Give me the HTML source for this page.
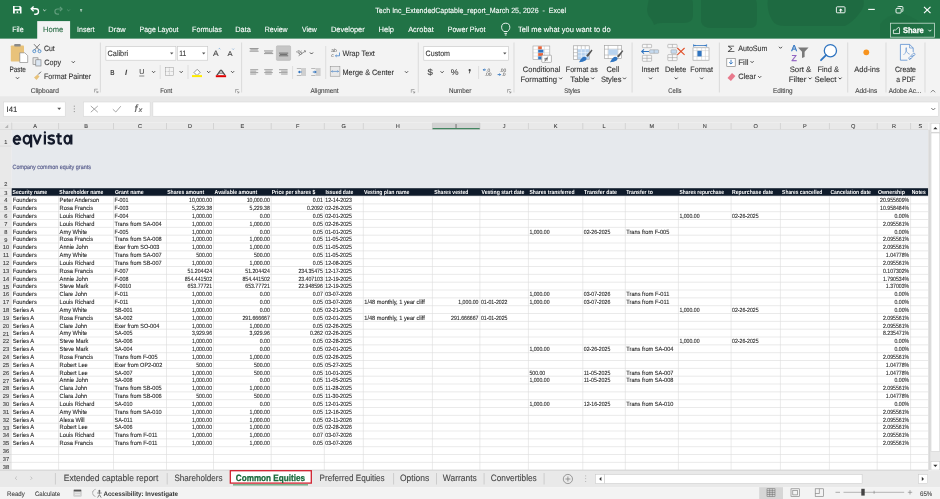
<!DOCTYPE html>
<html><head><meta charset="utf-8"><title>Excel - Common Equities</title>
<style>
html,body{margin:0;padding:0;width:940px;height:499px;overflow:hidden;background:#fff;}
svg{position:absolute;left:0;top:0;display:block;will-change:transform;}
text{font-family:"Liberation Sans",sans-serif;white-space:pre;text-rendering:geometricPrecision;}
</style></head><body>
<svg width="940" height="499" viewBox="0 0 940 499">
<rect x="0.00" y="0.00" width="940.00" height="38.80" fill="#217346" />
<g fill="#1e6940" opacity="0.8"><path d="M649 -2 h40 q4 0 4 6 v12 q0 7 -9 7 h-22 q-5 0 -8 2 q-1 -3 -3 -6 q-4 -4 -4 -10 z"/><path d="M701 -2 h52 q4 0 4 8 v14 q0 8 -6 8 h-40 q-8 0 -10 -6 z"/><path d="M768 -2 h95 q3 8 -4 16 q-6 8 -14 12 h-60 q-10 0 -13 -6 q-6 -10 -4 -22 z"/><path d="M880 24 q10 -12 24 -10 q14 4 20 14 v10 h-44 z" opacity="0.5"/></g>
<rect x="37.20" y="21.10" width="32.90" height="18.50" fill="#F3F3F3" />
<path d="M13 5.9 h7.2 l1.3 1.3 v6.4 h-8.5 z" fill="#fff"/><rect x="14.6" y="6.6" width="4.8" height="2.4" fill="#217346"/><rect x="14.8" y="10.6" width="5.2" height="3" fill="#217346"/><rect x="16.6" y="11.4" width="1.6" height="1.6" fill="#fff"/>
<g fill="none" stroke="#fff" stroke-width="1.4"><path d="M31.2 8.8 h4.6 a2.7 2.7 0 0 1 0 5.4 h-1.6"/><path d="M33.6 6.4 l-2.4 2.4 l2.4 2.4"/></g>
<path d="M43.2 9.6 l1.3 1.3 l1.3 -1.3" fill="none" stroke="#fff" stroke-width="0.8"/>
<g fill="none" stroke="#5f9c7b" stroke-width="1.2"><path d="M62 9 h-4.5 a2.6 2.6 0 0 0 0 5.2 h1.5"/><path d="M59.9 6.8 l2.2 2.2 l-2.2 2.2"/></g>
<path d="M67.2 9.6 l1.3 1.3 l1.3 -1.3" fill="none" stroke="#5f9c7b" stroke-width="0.8"/>
<g fill="#fff"><rect x="80" y="9.2" width="2.2" height="0.6"/><path d="M80 10.6 h2.2 l-1.1 1.1 z"/></g>
<text x="375.30" y="13.40" font-size="7.60" font-weight="normal" fill="#ffffff" stroke="#ffffff" stroke-width="0.1" textLength="190.70" lengthAdjust="spacingAndGlyphs" >Tech Inc_ExtendedCaptable_report_March 25, 2026  -  Excel</text>
<rect x="836.4" y="6.8" width="8.6" height="6" rx="0.8" fill="none" stroke="#fff" stroke-width="0.9"/><path d="M838.6 10.4 l2.1 -2 l2.1 2 z M840.2 10.2 h1 v2.2 h-1 z" fill="#fff"/>
<line x1="868.20" y1="9.40" x2="874.80" y2="9.40" stroke="#fff" stroke-width="1.1" />
<g fill="none" stroke="#fff" stroke-width="0.9"><rect x="896" y="8.4" width="5.2" height="4.6" rx="1"/><path d="M897.6 7.1 q0 -0.6 0.8 -0.6 h3.6 q0.9 0 0.9 0.9 v3.4 q0 0.8 -0.6 0.8"/></g>
<g stroke="#fff" stroke-width="1.15"><line x1="924" y1="6.8" x2="930.5" y2="13.2"/><line x1="930.5" y1="6.8" x2="924" y2="13.2"/></g>
<rect x="890.6" y="23.2" width="43.8" height="14" fill="none" stroke="#c5dccf" stroke-width="0.8"/>
<path d="M893.4 33.6 v-3.6 h2.2 l2.6 -2.4 q1.2 -0.6 1.3 0.6 v5.4 z" fill="none" stroke="#fff" stroke-width="0.8"/>
<text x="902.90" y="33.20" font-size="8.20" font-weight="bold" fill="#ffffff" stroke="#ffffff" stroke-width="0.25" textLength="20.90" lengthAdjust="spacingAndGlyphs" >Share</text>
<path d="M928.4 29.8 l1.5 1.5 l1.5 -1.5" fill="none" stroke="#fff" stroke-width="0.9"/>
<text x="12.20" y="32.20" font-size="7.70" font-weight="normal" fill="#ffffff" stroke="#ffffff" stroke-width="0.1" textLength="11.40" lengthAdjust="spacingAndGlyphs" >File</text>
<text x="43.10" y="32.20" font-size="7.70" font-weight="normal" fill="#2b6e47" stroke="#2b6e47" stroke-width="0.1" textLength="20.20" lengthAdjust="spacingAndGlyphs" >Home</text>
<text x="77.10" y="32.20" font-size="7.70" font-weight="normal" fill="#ffffff" stroke="#ffffff" stroke-width="0.1" textLength="17.50" lengthAdjust="spacingAndGlyphs" >Insert</text>
<text x="108.30" y="32.20" font-size="7.70" font-weight="normal" fill="#ffffff" stroke="#ffffff" stroke-width="0.1" textLength="17.38" lengthAdjust="spacingAndGlyphs" >Draw</text>
<text x="139.60" y="32.20" font-size="7.70" font-weight="normal" fill="#ffffff" stroke="#ffffff" stroke-width="0.1" textLength="38.90" lengthAdjust="spacingAndGlyphs" >Page Layout</text>
<text x="192.10" y="32.20" font-size="7.70" font-weight="normal" fill="#ffffff" stroke="#ffffff" stroke-width="0.1" textLength="29.80" lengthAdjust="spacingAndGlyphs" >Formulas</text>
<text x="235.30" y="32.20" font-size="7.70" font-weight="normal" fill="#ffffff" stroke="#ffffff" stroke-width="0.1" textLength="15.59" lengthAdjust="spacingAndGlyphs" >Data</text>
<text x="264.70" y="32.20" font-size="7.70" font-weight="normal" fill="#ffffff" stroke="#ffffff" stroke-width="0.1" textLength="22.98" lengthAdjust="spacingAndGlyphs" >Review</text>
<text x="301.90" y="32.20" font-size="7.70" font-weight="normal" fill="#ffffff" stroke="#ffffff" stroke-width="0.1" textLength="14.88" lengthAdjust="spacingAndGlyphs" >View</text>
<text x="331.00" y="32.20" font-size="7.70" font-weight="normal" fill="#ffffff" stroke="#ffffff" stroke-width="0.1" textLength="33.70" lengthAdjust="spacingAndGlyphs" >Developer</text>
<text x="378.50" y="32.20" font-size="7.70" font-weight="normal" fill="#ffffff" stroke="#ffffff" stroke-width="0.1" textLength="15.50" lengthAdjust="spacingAndGlyphs" >Help</text>
<text x="408.20" y="32.20" font-size="7.70" font-weight="normal" fill="#ffffff" stroke="#ffffff" stroke-width="0.1" textLength="25.50" lengthAdjust="spacingAndGlyphs" >Acrobat</text>
<text x="447.70" y="32.20" font-size="7.70" font-weight="normal" fill="#ffffff" stroke="#ffffff" stroke-width="0.1" textLength="37.80" lengthAdjust="spacingAndGlyphs" >Power Pivot</text>
<text x="518.00" y="32.20" font-size="7.70" font-weight="normal" fill="#ffffff" stroke="#ffffff" stroke-width="0.1" textLength="92.60" lengthAdjust="spacingAndGlyphs" >Tell me what you want to do</text>
<g fill="none" stroke="#fff" stroke-width="0.9"><path d="M503.8 31.5 c-1.5-1.5-2.2-2.6-2.2-4.2 a4.1 4.1 0 0 1 8.2 0 c0 1.6-0.7 2.7-2.2 4.2 z"/><line x1="504.4" y1="33.4" x2="507" y2="33.4"/><line x1="504.8" y1="35" x2="506.6" y2="35"/></g>
<rect x="0.00" y="38.80" width="940.00" height="57.40" fill="#F3F3F3" />
<line x1="100.40" y1="42.50" x2="100.40" y2="92.50" stroke="#d0d0d0" stroke-width="0.7" />
<line x1="241.60" y1="42.50" x2="241.60" y2="92.50" stroke="#d0d0d0" stroke-width="0.7" />
<line x1="418.30" y1="42.50" x2="418.30" y2="92.50" stroke="#d0d0d0" stroke-width="0.7" />
<line x1="514.00" y1="42.50" x2="514.00" y2="92.50" stroke="#d0d0d0" stroke-width="0.7" />
<line x1="632.10" y1="42.50" x2="632.10" y2="92.50" stroke="#d0d0d0" stroke-width="0.7" />
<line x1="719.40" y1="42.50" x2="719.40" y2="92.50" stroke="#d0d0d0" stroke-width="0.7" />
<line x1="847.70" y1="42.50" x2="847.70" y2="92.50" stroke="#d0d0d0" stroke-width="0.7" />
<line x1="886.00" y1="42.50" x2="886.00" y2="92.50" stroke="#d0d0d0" stroke-width="0.7" />
<line x1="925.00" y1="42.50" x2="925.00" y2="92.50" stroke="#d0d0d0" stroke-width="0.7" />
<rect x="10.8" y="45.5" width="13.2" height="16" rx="0.8" fill="#e8c27a"/>
<rect x="14.2" y="44" width="6.5" height="2.6" rx="0.8" fill="#8a8a8a"/>
<path d="M19.8 52.8 h5 l2.9 2.9 v6.8 h-7.9 z" fill="#fff" stroke="#7a7a7a" stroke-width="0.6"/>
<text x="9.40" y="71.80" font-size="7.80" font-weight="normal" fill="#333333" stroke="#333333" stroke-width="0.1" textLength="16.40" lengthAdjust="spacingAndGlyphs" >Paste</text>
<path d="M16 77.3 l1.5 1.5 l1.5 -1.5" fill="none" stroke="#444" stroke-width="1"/>
<g fill="none" stroke-width="0.8"><path d="M34 44.2 l5.5 6" stroke="#555"/><path d="M39.8 44.2 l-5.5 6" stroke="#555"/><circle cx="34.3" cy="51.2" r="1.5" stroke="#3b7fc4"/><circle cx="39.5" cy="51.2" r="1.5" stroke="#3b7fc4"/></g>
<text x="43.90" y="51.00" font-size="7.80" font-weight="normal" fill="#333333" stroke="#333333" stroke-width="0.1" textLength="10.80" lengthAdjust="spacingAndGlyphs" >Cut</text>
<g fill="none" stroke="#777" stroke-width="0.6"><rect x="33" y="57.8" width="5" height="6.5" fill="#e9e9e9"/><rect x="35.8" y="59.8" width="5.2" height="6.2" fill="#dbe6f2"/></g>
<text x="44.20" y="65.10" font-size="7.80" font-weight="normal" fill="#333333" stroke="#333333" stroke-width="0.1" textLength="16.80" lengthAdjust="spacingAndGlyphs" >Copy</text>
<path d="M71.8 61.3 l1.5 1.5 l1.5 -1.5" fill="none" stroke="#444" stroke-width="1"/>
<path d="M34 77.5 l3.5 -3 l2 2 l-3 3.5 z" fill="#e8c27a"/><path d="M38.2 74.5 l2.8 -2.8" stroke="#555" stroke-width="0.9"/>
<text x="44.00" y="79.40" font-size="7.80" font-weight="normal" fill="#333333" stroke="#333333" stroke-width="0.1" textLength="47.20" lengthAdjust="spacingAndGlyphs" >Format Painter</text>
<text x="30.70" y="93.40" font-size="6.90" font-weight="normal" fill="#444444" stroke="#444444" stroke-width="0.1" textLength="28.20" lengthAdjust="spacingAndGlyphs" >Clipboard</text>
<g fill="none" stroke="#777" stroke-width="0.55"><path d="M94.5 92.4 v-3.2 h3.2"/><path d="M95.7 90.4 l2.2 2.2 M97.9 91.0 v1.6 h-1.6"/></g>
<rect x="105.9" y="46.6" width="70" height="13.6" fill="#fff" stroke="#c6c6c6" stroke-width="0.6"/>
<text x="107.60" y="56.30" font-size="7.80" font-weight="normal" fill="#333333" stroke="#333333" stroke-width="0.1" textLength="20.60" lengthAdjust="spacingAndGlyphs" >Calibri</text>
<path d="M170.0 52.6 h3.4 l-1.7 2 z" fill="#555"/>
<rect x="177.5" y="46.6" width="30.2" height="13.6" fill="#fff" stroke="#c6c6c6" stroke-width="0.6"/>
<text x="179.20" y="56.30" font-size="7.80" font-weight="normal" fill="#333333" stroke="#333333" stroke-width="0.1" textLength="7.00" lengthAdjust="spacingAndGlyphs" >11</text>
<path d="M202.0 52.6 h3.4 l-1.7 2 z" fill="#555"/>
<text x="213.00" y="55.50" font-size="7.80" font-weight="normal" fill="#444" stroke="#444" stroke-width="0.1" textLength="5.60" lengthAdjust="spacingAndGlyphs" >A</text>
<path d="M218.5 49.2 l0.9 -0.9 l0.9 0.9" fill="none" stroke="#3b7fc4" stroke-width="0.5"/>
<text x="227.50" y="55.50" font-size="6.80" font-weight="normal" fill="#444" stroke="#444" stroke-width="0.1" textLength="5.10" lengthAdjust="spacingAndGlyphs" >A</text>
<path d="M232.3 48.6 l0.9 0.9 l0.9 -0.9" fill="none" stroke="#3b7fc4" stroke-width="0.5"/>
<text x="110.20" y="75.10" font-size="7.40" font-weight="bold" fill="#444" textLength="4.30" lengthAdjust="spacingAndGlyphs" >B</text>
<text x="125" y="75.1" font-size="7.6" font-style="italic" font-weight="bold" fill="#444">I</text>
<text x="139.20" y="74.40" font-size="7.20" font-weight="normal" fill="#444" stroke="#444" stroke-width="0.1" textLength="5.10" lengthAdjust="spacingAndGlyphs" >U</text>
<line x1="139.20" y1="76.00" x2="144.30" y2="76.00" stroke="#444" stroke-width="0.6" />
<path d="M152.1 71.2 l1.5 1.5 l1.5 -1.5" fill="none" stroke="#444" stroke-width="1"/>
<path d="M179.70000000000002 71.2 l1.5 1.5 l1.5 -1.5" fill="none" stroke="#444" stroke-width="1"/>
<path d="M207.20000000000002 71.2 l1.5 1.5 l1.5 -1.5" fill="none" stroke="#444" stroke-width="1"/>
<path d="M231.1 71.2 l1.5 1.5 l1.5 -1.5" fill="none" stroke="#444" stroke-width="1"/>
<line x1="160.20" y1="65.00" x2="160.20" y2="79.00" stroke="#d0d0d0" stroke-width="0.6" />
<g fill="none" stroke="#999" stroke-width="0.5"><rect x="165.3" y="67.5" width="8.2" height="8"/><line x1="169.4" y1="67.5" x2="169.4" y2="75.5" stroke-dasharray="0.8 0.6"/><line x1="165.3" y1="71.5" x2="173.5" y2="71.5" stroke-dasharray="0.8 0.6"/></g>
<line x1="188.00" y1="65.00" x2="188.00" y2="79.00" stroke="#d0d0d0" stroke-width="0.6" />
<path d="M194 72.5 l3.2 -3.2 l3 3 l-3.2 3.2 z" fill="#fff" stroke="#555" stroke-width="0.6"/><rect x="192" y="75.1" width="10" height="2" fill="#ffeb00"/>
<text x="216.50" y="74.60" font-size="7.60" font-weight="normal" fill="#444" stroke="#444" stroke-width="0.1" textLength="9.00" lengthAdjust="spacingAndGlyphs" >A</text>
<rect x="215.80" y="75.20" width="10.30" height="2.00" fill="#e00000" />
<text x="160.20" y="93.40" font-size="6.90" font-weight="normal" fill="#444444" stroke="#444444" stroke-width="0.1" textLength="12.00" lengthAdjust="spacingAndGlyphs" >Font</text>
<g fill="none" stroke="#777" stroke-width="0.55"><path d="M235.5 92.7 v-3.2 h3.2"/><path d="M236.7 90.7 l2.2 2.2 M238.9 91.3 v1.6 h-1.6"/></g>
<rect x="249.60" y="48.00" width="9.00" height="1.00" fill="#9a9a9a" />
<rect x="250.35" y="49.35" width="7.50" height="1.00" fill="#9a9a9a" />
<rect x="249.60" y="50.70" width="9.00" height="1.00" fill="#9a9a9a" />
<rect x="264.00" y="50.40" width="9.20" height="1.00" fill="#9a9a9a" />
<rect x="264.85" y="51.75" width="7.50" height="1.00" fill="#9a9a9a" />
<rect x="264.00" y="53.10" width="9.20" height="1.00" fill="#9a9a9a" />
<rect x="276.4" y="45.8" width="14.2" height="14.6" rx="1" fill="#c6c6c6" stroke="#b2b2b2" stroke-width="0.5"/>
<rect x="279.00" y="52.60" width="9.20" height="1.00" fill="#6e6e6e" />
<rect x="279.85" y="53.95" width="7.50" height="1.00" fill="#6e6e6e" />
<rect x="279.00" y="55.30" width="9.20" height="1.00" fill="#6e6e6e" />
<rect x="250.20" y="69.20" width="8.00" height="1.00" fill="#a0a0a0" />
<rect x="250.20" y="70.65" width="6.00" height="1.00" fill="#a0a0a0" />
<rect x="250.20" y="72.10" width="8.00" height="1.00" fill="#a0a0a0" />
<rect x="250.20" y="73.55" width="6.00" height="1.00" fill="#a0a0a0" />
<rect x="264.20" y="69.20" width="8.60" height="1.00" fill="#a0a0a0" />
<rect x="265.25" y="70.65" width="6.50" height="1.00" fill="#a0a0a0" />
<rect x="264.20" y="72.10" width="8.60" height="1.00" fill="#a0a0a0" />
<rect x="265.25" y="73.55" width="6.50" height="1.00" fill="#a0a0a0" />
<rect x="279.00" y="69.20" width="8.60" height="1.00" fill="#a0a0a0" />
<rect x="281.10" y="70.65" width="6.50" height="1.00" fill="#a0a0a0" />
<rect x="279.00" y="72.10" width="8.60" height="1.00" fill="#a0a0a0" />
<rect x="281.10" y="73.55" width="6.50" height="1.00" fill="#a0a0a0" />
<text x="296.6" y="54.2" font-size="5.6" fill="#666" transform="rotate(38 300 52)">ab</text><path d="M298.6 55.8 l6.6 -4.6 M304.2 50.4 l1.4 0.5 l-0.4 1.4" fill="none" stroke="#666" stroke-width="0.7"/>
<path d="M310 52.5 l1.5 1.5 l1.5 -1.5" fill="none" stroke="#444" stroke-width="1"/>
<line x1="292.60" y1="66.00" x2="292.60" y2="79.00" stroke="#d0d0d0" stroke-width="0.6" />
<rect x="301" y="68" width="5" height="8" fill="#cfcfcf"/><rect x="296.8" y="68" width="4.2" height="0.8" fill="#aaa"/><rect x="296.8" y="75.2" width="4.2" height="0.8" fill="#aaa"/><path d="M300 70.4 l-2.3 1.6 l2.3 1.6 z" fill="#2f74c0"/><rect x="299.6" y="71.5" width="2" height="1" fill="#2f74c0"/>
<rect x="315.6" y="68" width="5" height="8" fill="#cfcfcf"/><rect x="311.2" y="68" width="4.2" height="0.8" fill="#aaa"/><rect x="311.2" y="75.2" width="4.2" height="0.8" fill="#aaa"/><path d="M314.6 70.4 l2.3 1.6 l-2.3 1.6 z" fill="#2f74c0"/><rect x="312.8" y="71.5" width="2" height="1" fill="#2f74c0"/>
<line x1="325.70" y1="46.00" x2="325.70" y2="79.00" stroke="#d0d0d0" stroke-width="0.6" />
<text x="331.3" y="52.2" font-size="5" fill="#555">ab</text><text x="331.3" y="57.3" font-size="5" fill="#555">c</text><path d="M339.5 52.5 v3.3 h-4 M336.6 54.8 l-1.1 1 l1.1 1" fill="none" stroke="#2f74c0" stroke-width="0.7"/>
<text x="342.40" y="55.70" font-size="7.80" font-weight="normal" fill="#333333" stroke="#333333" stroke-width="0.1" textLength="32.50" lengthAdjust="spacingAndGlyphs" >Wrap Text</text>
<rect x="330.2" y="66.7" width="9.7" height="9.5" fill="#e9e9e9" stroke="#888" stroke-width="0.5"/><path d="M331.5 71.4 h7 M332.5 70.4 l-1 1 l1 1 M337.5 70.4 l1 1 l-1 1" fill="none" stroke="#2f74c0" stroke-width="0.6"/>
<text x="342.40" y="75.40" font-size="7.80" font-weight="normal" fill="#333333" stroke="#333333" stroke-width="0.1" textLength="51.60" lengthAdjust="spacingAndGlyphs" >Merge &amp; Center</text>
<path d="M405 71.3 l1.5 1.5 l1.5 -1.5" fill="none" stroke="#444" stroke-width="1"/>
<text x="310.40" y="93.40" font-size="6.90" font-weight="normal" fill="#444444" stroke="#444444" stroke-width="0.1" textLength="28.10" lengthAdjust="spacingAndGlyphs" >Alignment</text>
<g fill="none" stroke="#777" stroke-width="0.55"><path d="M411.3 92.7 v-3.2 h3.2"/><path d="M412.5 90.7 l2.2 2.2 M414.7 91.3 v1.6 h-1.6"/></g>
<rect x="423.8" y="46.6" width="84.8" height="13.6" fill="#fff" stroke="#c6c6c6" stroke-width="0.6"/>
<text x="425.60" y="56.30" font-size="7.80" font-weight="normal" fill="#333333" stroke="#333333" stroke-width="0.1" textLength="24.40" lengthAdjust="spacingAndGlyphs" >Custom</text>
<path d="M503.1 52.6 h3.4 l-1.7 2 z" fill="#555"/>
<text x="427.40" y="75.40" font-size="8.60" font-weight="normal" fill="#444" stroke="#444" stroke-width="0.1" textLength="5.40" lengthAdjust="spacingAndGlyphs" >$</text>
<path d="M440.6 71.3 l1.5 1.5 l1.5 -1.5" fill="none" stroke="#444" stroke-width="1"/>
<text x="450.70" y="75.10" font-size="8.40" font-weight="normal" fill="#444" stroke="#444" stroke-width="0.1" textLength="7.80" lengthAdjust="spacingAndGlyphs" >%</text>
<path d="M468.6 70.2 a1.1 1.1 0 1 1 2 0.6 l-1.2 2.6 l-0.6 -0.2 l0.7 -2 a1.1 1.1 0 0 1 -0.9 -1 z" fill="#444"/>
<line x1="478.60" y1="66.00" x2="478.60" y2="79.00" stroke="#d0d0d0" stroke-width="0.6" />
<text x="486.2" y="71.6" font-size="5" fill="#444">.0</text><text x="484.6" y="76.4" font-size="5" fill="#444">.00</text><path d="M483.3 69.8 h2.6 M484.4 68.7 l-1.1 1.1 l1.1 1.1" fill="none" stroke="#2f74c0" stroke-width="0.9"/>
<text x="499.4" y="71.6" font-size="5" fill="#444">.00</text><text x="501.4" y="76.4" font-size="5" fill="#444">.0</text><path d="M497.6 74.6 h3 M499.5 73.5 l1.1 1.1 l-1.1 1.1" fill="none" stroke="#2f74c0" stroke-width="0.9"/>
<text x="449.10" y="93.40" font-size="6.90" font-weight="normal" fill="#444444" stroke="#444444" stroke-width="0.1" textLength="22.30" lengthAdjust="spacingAndGlyphs" >Number</text>
<g fill="none" stroke="#777" stroke-width="0.55"><path d="M507.5 92.7 v-3.2 h3.2"/><path d="M508.7 90.7 l2.2 2.2 M510.9 91.3 v1.6 h-1.6"/></g>
<rect x="533" y="46" width="16.8" height="13.5" fill="#fff" stroke="#a0a0a0" stroke-width="0.6"/><g stroke="#c8c8c8" stroke-width="0.45"><line x1="533" y1="49.4" x2="549.8" y2="49.4"/><line x1="533" y1="52.8" x2="549.8" y2="52.8"/><line x1="533" y1="56.1" x2="549.8" y2="56.1"/><line x1="538" y1="46" x2="538" y2="59.5"/><line x1="544.4" y1="46" x2="544.4" y2="59.5"/></g>
<rect x="538.20" y="46.30" width="3.60" height="3.00" fill="#e8643a" />
<rect x="538.20" y="49.70" width="5.20" height="2.90" fill="#2f74c0" />
<rect x="538.20" y="53.10" width="4.80" height="2.80" fill="#e8643a" />
<rect x="538.20" y="56.40" width="3.40" height="2.90" fill="#2f74c0" />
<rect x="541.8" y="55.2" width="9.6" height="7.2" rx="0.6" fill="#fff" stroke="#8a8a8a" stroke-width="0.6"/><path d="M544.4 58.4 h3.6 M544.4 59.9 h3.6 M547.8 56.6 l-3 4.8" stroke="#555" stroke-width="0.7"/>
<text x="522.80" y="71.80" font-size="7.80" font-weight="normal" fill="#333333" stroke="#333333" stroke-width="0.1" textLength="37.50" lengthAdjust="spacingAndGlyphs" >Conditional</text>
<text x="520.40" y="81.50" font-size="7.80" font-weight="normal" fill="#333333" stroke="#333333" stroke-width="0.1" textLength="36.60" lengthAdjust="spacingAndGlyphs" >Formatting</text>
<path d="M559.2 77.6 l1.5 1.5 l1.5 -1.5" fill="none" stroke="#444" stroke-width="1"/>
<rect x="573.4" y="45.8" width="15.8" height="13.6" fill="#fff" stroke="#9a9a9a" stroke-width="0.6"/>
<rect x="577.40" y="49.20" width="11.80" height="10.20" fill="#b8d3ef" />
<g stroke="#fff" stroke-width="0.5"><line x1="581.3" y1="49.2" x2="581.3" y2="59.4"/><line x1="585.2" y1="49.2" x2="585.2" y2="59.4"/><line x1="577.4" y1="52.6" x2="589.2" y2="52.6"/><line x1="577.4" y1="56" x2="589.2" y2="56"/></g>
<g stroke="#9a9a9a" stroke-width="0.5"><line x1="577.4" y1="45.8" x2="577.4" y2="59.4"/><line x1="581.3" y1="45.8" x2="581.3" y2="49.2"/><line x1="585.2" y1="45.8" x2="585.2" y2="49.2"/><line x1="573.4" y1="49.2" x2="577.4" y2="49.2"/><line x1="573.4" y1="52.6" x2="577.4" y2="52.6"/><line x1="573.4" y1="56" x2="577.4" y2="56"/></g>
<path d="M586.2 55.6 l5.4 -6 l0.9 0.8 l-4.6 6.6 z" fill="#555"/><path d="M579 62.3 q1.5 -3.5 4 -5.2 q2 -1 3.4 0.6 q0.6 1.4 -0.8 2.8 q-2.5 1.8 -6.6 1.8 z" fill="#2f74c0"/>
<text x="565.80" y="71.80" font-size="7.80" font-weight="normal" fill="#333333" stroke="#333333" stroke-width="0.1" textLength="32.00" lengthAdjust="spacingAndGlyphs" >Format as</text>
<text x="570.30" y="81.50" font-size="7.80" font-weight="normal" fill="#333333" stroke="#333333" stroke-width="0.1" textLength="19.20" lengthAdjust="spacingAndGlyphs" >Table</text>
<path d="M591.2 77.6 l1.5 1.5 l1.5 -1.5" fill="none" stroke="#444" stroke-width="1"/>
<rect x="604.4" y="45.6" width="17.2" height="13" fill="#fff" stroke="#9a9a9a" stroke-width="0.6"/>
<g stroke="#9a9a9a" stroke-width="0.5"><line x1="608.2" y1="45.6" x2="608.2" y2="58.6"/><line x1="617.8" y1="45.6" x2="617.8" y2="58.6"/><line x1="604.4" y1="49.2" x2="621.6" y2="49.2"/><line x1="604.4" y1="55" x2="621.6" y2="55"/></g>
<rect x="608.40" y="49.40" width="9.20" height="5.40" fill="#b8d3ef" />
<path d="M617 56.2 l5.4 -6 l0.9 0.8 l-4.6 6.6 z" fill="#555"/><path d="M610 62.3 q1.5 -3.5 4 -5.2 q2 -1 3.4 0.6 q0.6 1.4 -0.8 2.8 q-2.5 1.8 -6.6 1.8 z" fill="#2f74c0"/>
<text x="606.50" y="71.80" font-size="7.80" font-weight="normal" fill="#333333" stroke="#333333" stroke-width="0.1" textLength="12.80" lengthAdjust="spacingAndGlyphs" >Cell</text>
<text x="601.00" y="81.50" font-size="7.80" font-weight="normal" fill="#333333" stroke="#333333" stroke-width="0.1" textLength="20.50" lengthAdjust="spacingAndGlyphs" >Styles</text>
<path d="M623 77.6 l1.5 1.5 l1.5 -1.5" fill="none" stroke="#444" stroke-width="1"/>
<text x="564.30" y="93.40" font-size="6.90" font-weight="normal" fill="#444444" stroke="#444444" stroke-width="0.1" textLength="15.90" lengthAdjust="spacingAndGlyphs" >Styles</text>
<g fill="#f8f8f8" stroke="#9a9a9a" stroke-width="0.55"><rect x="642.4" y="44.4" width="9.2" height="3.3" rx="0.6"/><line x1="647" y1="44.4" x2="647" y2="47.7"/><rect x="649.6" y="49.8" width="9" height="3.5" rx="0.6" fill="#c5daf0"/><line x1="654.1" y1="49.8" x2="654.1" y2="53.3"/><rect x="642.4" y="55.3" width="9.2" height="6" rx="0.6"/><line x1="647" y1="55.3" x2="647" y2="61.3"/><line x1="642.4" y1="58.3" x2="651.6" y2="58.3"/></g><path d="M649 51.55 h-7.4 M644 49.4 l-2.3 2.15 l2.3 2.15" fill="none" stroke="#2f74c0" stroke-width="1.1"/>
<text x="641.50" y="71.80" font-size="7.80" font-weight="normal" fill="#333333" stroke="#333333" stroke-width="0.1" textLength="17.50" lengthAdjust="spacingAndGlyphs" >Insert</text>
<g fill="#f8f8f8" stroke="#9a9a9a" stroke-width="0.55"><rect x="667.8" y="44.4" width="9.3" height="3.3" rx="0.6"/><line x1="672.4" y1="44.4" x2="672.4" y2="47.7"/><rect x="671" y="49.8" width="5.6" height="3.5" rx="0.6" fill="#c5daf0"/><rect x="667.8" y="54.6" width="9.3" height="6" rx="0.6"/><line x1="672.4" y1="54.6" x2="672.4" y2="60.6"/><line x1="667.8" y1="57.6" x2="677.1" y2="57.6"/></g><path d="M677.3 48 l7.3 6.9 M684.6 48 l-7.3 6.9" stroke="#e0502a" stroke-width="1.1"/>
<text x="665.10" y="71.80" font-size="7.80" font-weight="normal" fill="#333333" stroke="#333333" stroke-width="0.1" textLength="21.10" lengthAdjust="spacingAndGlyphs" >Delete</text>
<rect x="693" y="47.8" width="16" height="12.4" fill="#fff" stroke="#9a9a9a" stroke-width="0.6"/><g stroke="#c4c4c4" stroke-width="0.45"><line x1="697" y1="47.8" x2="697" y2="60.2"/><line x1="701.6" y1="47.8" x2="701.6" y2="60.2"/><line x1="705.4" y1="47.8" x2="705.4" y2="60.2"/><line x1="693" y1="50.6" x2="709" y2="50.6"/><line x1="693" y1="56.4" x2="709" y2="56.4"/></g>
<rect x="697.40" y="50.80" width="4.20" height="5.60" fill="#2f74c0" />
<path d="M693.6 45.5 h13 M693.6 44.3 v2.4 M706.6 44.3 v2.4" fill="none" stroke="#2f74c0" stroke-width="0.8"/><circle cx="695" cy="45.5" r="0.7" fill="#2f74c0"/><circle cx="705.2" cy="45.5" r="0.7" fill="#2f74c0"/>
<text x="690.30" y="71.80" font-size="7.80" font-weight="normal" fill="#333333" stroke="#333333" stroke-width="0.1" textLength="22.70" lengthAdjust="spacingAndGlyphs" >Format</text>
<path d="M649.1 77.6 l1.5 1.5 l1.5 -1.5" fill="none" stroke="#444" stroke-width="1"/>
<path d="M674.6999999999999 77.6 l1.5 1.5 l1.5 -1.5" fill="none" stroke="#444" stroke-width="1"/>
<path d="M700.1 77.6 l1.5 1.5 l1.5 -1.5" fill="none" stroke="#444" stroke-width="1"/>
<text x="668.30" y="93.40" font-size="6.90" font-weight="normal" fill="#444444" stroke="#444444" stroke-width="0.1" textLength="13.10" lengthAdjust="spacingAndGlyphs" >Cells</text>
<text x="727.30" y="51.60" font-size="9.20" font-weight="normal" fill="#444" textLength="7.70" lengthAdjust="spacingAndGlyphs" >Σ</text>
<text x="738.20" y="50.70" font-size="7.80" font-weight="normal" fill="#333333" stroke="#333333" stroke-width="0.1" textLength="29.30" lengthAdjust="spacingAndGlyphs" >AutoSum</text>
<path d="M779 46.8 l1.5 1.5 l1.5 -1.5" fill="none" stroke="#444" stroke-width="1"/>
<rect x="726.8" y="58.5" width="8.4" height="7.8" fill="#fff" stroke="#777" stroke-width="0.6"/><path d="M731 59.8 v4.2 M729.2 62.3 l1.8 1.8 l1.8 -1.8" fill="none" stroke="#2f74c0" stroke-width="0.9"/>
<text x="738.20" y="64.90" font-size="7.80" font-weight="normal" fill="#333333" stroke="#333333" stroke-width="0.1" textLength="10.30" lengthAdjust="spacingAndGlyphs" >Fill</text>
<path d="M750.6 61.2 l1.5 1.5 l1.5 -1.5" fill="none" stroke="#444" stroke-width="1"/>
<path d="M727.5 78 l4.5 -5 l3.4 3 l-4.5 5 z" fill="#e8798c"/>
<text x="738.20" y="79.40" font-size="7.80" font-weight="normal" fill="#333333" stroke="#333333" stroke-width="0.1" textLength="17.80" lengthAdjust="spacingAndGlyphs" >Clear</text>
<path d="M758.2 76.2 l1.5 1.5 l1.5 -1.5" fill="none" stroke="#444" stroke-width="1"/>
<text x="791.2" y="51.2" font-size="8.6" fill="#2f74c0" stroke="#2f74c0" stroke-width="0.3">A</text><text x="791.4" y="60.8" font-size="8.6" fill="#8e5fc0" stroke="#8e5fc0" stroke-width="0.3">Z</text><path d="M798 47.6 h10.6 l-4 4.2 v5.2 l-2.6 1 v-6.2 z" fill="#7a7a7a"/>
<text x="789.70" y="72.00" font-size="7.80" font-weight="normal" fill="#333333" stroke="#333333" stroke-width="0.1" textLength="21.60" lengthAdjust="spacingAndGlyphs" >Sort &amp;</text>
<text x="788.70" y="81.70" font-size="7.80" font-weight="normal" fill="#333333" stroke="#333333" stroke-width="0.1" textLength="17.80" lengthAdjust="spacingAndGlyphs" >Filter</text>
<path d="M808.6 77.6 l1.5 1.5 l1.5 -1.5" fill="none" stroke="#444" stroke-width="1"/>
<circle cx="830.4" cy="50.7" r="6.1" fill="#fff" stroke="#2f74c0" stroke-width="1.3"/><path d="M826 55.2 l-5 5" stroke="#2f74c0" stroke-width="1.8" stroke-linecap="round"/>
<text x="817.40" y="72.00" font-size="7.80" font-weight="normal" fill="#333333" stroke="#333333" stroke-width="0.1" textLength="21.50" lengthAdjust="spacingAndGlyphs" >Find &amp;</text>
<text x="814.60" y="81.70" font-size="7.80" font-weight="normal" fill="#333333" stroke="#333333" stroke-width="0.1" textLength="21.90" lengthAdjust="spacingAndGlyphs" >Select</text>
<path d="M838.6 77.6 l1.5 1.5 l1.5 -1.5" fill="none" stroke="#444" stroke-width="1"/>
<text x="773.00" y="93.40" font-size="6.90" font-weight="normal" fill="#444444" stroke="#444444" stroke-width="0.1" textLength="19.60" lengthAdjust="spacingAndGlyphs" >Editing</text>
<circle cx="866.3" cy="52.3" r="2.9" fill="#f7931e"/>
<text x="854.20" y="71.80" font-size="7.80" font-weight="normal" fill="#333333" stroke="#333333" stroke-width="0.1" textLength="25.50" lengthAdjust="spacingAndGlyphs" >Add-ins</text>
<text x="855.20" y="93.40" font-size="6.90" font-weight="normal" fill="#444444" stroke="#444444" stroke-width="0.1" textLength="22.00" lengthAdjust="spacingAndGlyphs" >Add-ins</text>
<path d="M913.2 52 v-4 l-3.6 -3.6 h-9.2 v15.8 h7" fill="#f7f7f7" stroke="#5b8fd0" stroke-width="0.8"/><path d="M909.6 44.4 v3.6 h3.6" fill="none" stroke="#5b8fd0" stroke-width="0.7"/><path d="M903.4 55 q2 -1 3 -5 q0.5 -3 -0.4 -2.4 q-0.8 1 0.6 4 q1.4 2.4 3.2 2.6" fill="none" stroke="#5b8fd0" stroke-width="0.6"/><path d="M909.4 59.6 l1.6 -1.6 M912.2 56.8 l1.6 -1.6" stroke="#5b8fd0" stroke-width="0.8"/><rect x="908.6" y="56.6" width="3.6" height="2.2" rx="1.1" transform="rotate(-45 910.4 57.7)" fill="none" stroke="#5b8fd0" stroke-width="0.7"/><rect x="911.6" y="53.6" width="3.6" height="2.2" rx="1.1" transform="rotate(-45 913.4 54.7)" fill="none" stroke="#5b8fd0" stroke-width="0.7"/>
<text x="895.00" y="71.80" font-size="7.80" font-weight="normal" fill="#333333" stroke="#333333" stroke-width="0.1" textLength="21.00" lengthAdjust="spacingAndGlyphs" >Create</text>
<text x="896.30" y="81.50" font-size="7.80" font-weight="normal" fill="#333333" stroke="#333333" stroke-width="0.1" textLength="19.20" lengthAdjust="spacingAndGlyphs" >a PDF</text>
<text x="888.70" y="93.40" font-size="6.90" font-weight="normal" fill="#444444" stroke="#444444" stroke-width="0.1" textLength="32.50" lengthAdjust="spacingAndGlyphs" >Adobe Ac...</text>
<path d="M930.8 92.3 l2.2 -2.2 l2.2 2.2" fill="none" stroke="#555" stroke-width="0.7"/>
<rect x="0.00" y="96.20" width="940.00" height="26.30" fill="#E8E8E8" />
<rect x="3.6" y="102" width="61.6" height="14.2" fill="#fff" stroke="#d4d4d4" stroke-width="0.5"/>
<text x="6.60" y="112.20" font-size="7.80" font-weight="normal" fill="#333" stroke="#333" stroke-width="0.1" textLength="10.80" lengthAdjust="spacingAndGlyphs" >I41</text>
<path d="M57.3 107.8 h3.8 l-1.9 2.2 z" fill="#555"/>
<rect x="73.80" y="105.70" width="1.00" height="1.00" fill="#888" />
<rect x="73.80" y="108.40" width="1.00" height="1.00" fill="#888" />
<rect x="73.80" y="111.10" width="1.00" height="1.00" fill="#888" />
<rect x="83.5" y="102" width="66.6" height="14.2" fill="#fff" stroke="#d4d4d4" stroke-width="0.5"/>
<g stroke="#9c9c9c" stroke-width="0.9"><line x1="90.8" y1="106" x2="97.8" y2="112.2"/><line x1="97.8" y1="106" x2="90.8" y2="112.2"/></g>
<path d="M112.8 109.2 l3 2.8 l5 -5.8" fill="none" stroke="#9c9c9c" stroke-width="0.9"/>
<text x="134.6" y="111.8" font-family="Liberation Serif" font-style="italic" font-size="10.5" fill="#666" stroke="#666" stroke-width="0.2">f</text><text x="138.8" y="112.2" font-family="Liberation Serif" font-style="italic" font-size="6.8" fill="#666" stroke="#666" stroke-width="0.2">x</text>
<rect x="152.9" y="102" width="785.6" height="14.2" fill="#fff" stroke="#d4d4d4" stroke-width="0.5"/>
<path d="M931.3 108 l2 2 l2 -2" fill="none" stroke="#555" stroke-width="0.8"/>
<rect x="0.00" y="122.50" width="928.40" height="7.20" fill="#E9E9E9" />
<rect x="432.40" y="122.60" width="47.50" height="7.00" fill="#d2d2d2" />
<rect x="432.40" y="128.20" width="47.50" height="1.50" fill="#217346" />
<line x1="0.00" y1="129.60" x2="928.40" y2="129.60" stroke="#c8c8c8" stroke-width="0.7" />
<line x1="58.60" y1="123.00" x2="58.60" y2="129.30" stroke="#bdbdbd" stroke-width="0.5" />
<line x1="113.50" y1="123.00" x2="113.50" y2="129.30" stroke="#bdbdbd" stroke-width="0.5" />
<line x1="166.50" y1="123.00" x2="166.50" y2="129.30" stroke="#bdbdbd" stroke-width="0.5" />
<line x1="213.50" y1="123.00" x2="213.50" y2="129.30" stroke="#bdbdbd" stroke-width="0.5" />
<line x1="271.20" y1="123.00" x2="271.20" y2="129.30" stroke="#bdbdbd" stroke-width="0.5" />
<line x1="324.30" y1="123.00" x2="324.30" y2="129.30" stroke="#bdbdbd" stroke-width="0.5" />
<line x1="363.30" y1="123.00" x2="363.30" y2="129.30" stroke="#bdbdbd" stroke-width="0.5" />
<line x1="432.40" y1="123.00" x2="432.40" y2="129.30" stroke="#bdbdbd" stroke-width="0.5" />
<line x1="479.90" y1="123.00" x2="479.90" y2="129.30" stroke="#bdbdbd" stroke-width="0.5" />
<line x1="528.40" y1="123.00" x2="528.40" y2="129.30" stroke="#bdbdbd" stroke-width="0.5" />
<line x1="582.80" y1="123.00" x2="582.80" y2="129.30" stroke="#bdbdbd" stroke-width="0.5" />
<line x1="625.30" y1="123.00" x2="625.30" y2="129.30" stroke="#bdbdbd" stroke-width="0.5" />
<line x1="678.40" y1="123.00" x2="678.40" y2="129.30" stroke="#bdbdbd" stroke-width="0.5" />
<line x1="731.10" y1="123.00" x2="731.10" y2="129.30" stroke="#bdbdbd" stroke-width="0.5" />
<line x1="780.40" y1="123.00" x2="780.40" y2="129.30" stroke="#bdbdbd" stroke-width="0.5" />
<line x1="829.40" y1="123.00" x2="829.40" y2="129.30" stroke="#bdbdbd" stroke-width="0.5" />
<line x1="877.20" y1="123.00" x2="877.20" y2="129.30" stroke="#bdbdbd" stroke-width="0.5" />
<line x1="910.60" y1="123.00" x2="910.60" y2="129.30" stroke="#bdbdbd" stroke-width="0.5" />
<text x="33.28" y="128.20" font-size="5.60" font-weight="normal" fill="#444444" stroke="#444444" stroke-width="0.1" textLength="3.74" lengthAdjust="spacingAndGlyphs" >A</text>
<text x="84.18" y="128.20" font-size="5.60" font-weight="normal" fill="#444444" stroke="#444444" stroke-width="0.1" textLength="3.74" lengthAdjust="spacingAndGlyphs" >B</text>
<text x="137.98" y="128.20" font-size="5.60" font-weight="normal" fill="#444444" stroke="#444444" stroke-width="0.1" textLength="4.04" lengthAdjust="spacingAndGlyphs" >C</text>
<text x="187.98" y="128.20" font-size="5.60" font-weight="normal" fill="#444444" stroke="#444444" stroke-width="0.1" textLength="4.04" lengthAdjust="spacingAndGlyphs" >D</text>
<text x="240.48" y="128.20" font-size="5.60" font-weight="normal" fill="#444444" stroke="#444444" stroke-width="0.1" textLength="3.74" lengthAdjust="spacingAndGlyphs" >E</text>
<text x="296.04" y="128.20" font-size="5.60" font-weight="normal" fill="#444444" stroke="#444444" stroke-width="0.1" textLength="3.42" lengthAdjust="spacingAndGlyphs" >F</text>
<text x="341.62" y="128.20" font-size="5.60" font-weight="normal" fill="#444444" stroke="#444444" stroke-width="0.1" textLength="4.36" lengthAdjust="spacingAndGlyphs" >G</text>
<text x="395.83" y="128.20" font-size="5.60" font-weight="normal" fill="#444444" stroke="#444444" stroke-width="0.1" textLength="4.04" lengthAdjust="spacingAndGlyphs" >H</text>
<text x="455.37" y="128.20" font-size="5.60" font-weight="normal" fill="#444444" stroke="#444444" stroke-width="0.1" textLength="1.56" lengthAdjust="spacingAndGlyphs" >I</text>
<text x="502.75" y="128.20" font-size="5.60" font-weight="normal" fill="#444444" stroke="#444444" stroke-width="0.1" textLength="2.80" lengthAdjust="spacingAndGlyphs" >J</text>
<text x="553.73" y="128.20" font-size="5.60" font-weight="normal" fill="#444444" stroke="#444444" stroke-width="0.1" textLength="3.74" lengthAdjust="spacingAndGlyphs" >K</text>
<text x="602.49" y="128.20" font-size="5.60" font-weight="normal" fill="#444444" stroke="#444444" stroke-width="0.1" textLength="3.11" lengthAdjust="spacingAndGlyphs" >L</text>
<text x="649.52" y="128.20" font-size="5.60" font-weight="normal" fill="#444444" stroke="#444444" stroke-width="0.1" textLength="4.66" lengthAdjust="spacingAndGlyphs" >M</text>
<text x="702.73" y="128.20" font-size="5.60" font-weight="normal" fill="#444444" stroke="#444444" stroke-width="0.1" textLength="4.04" lengthAdjust="spacingAndGlyphs" >N</text>
<text x="753.57" y="128.20" font-size="5.60" font-weight="normal" fill="#444444" stroke="#444444" stroke-width="0.1" textLength="4.36" lengthAdjust="spacingAndGlyphs" >O</text>
<text x="803.03" y="128.20" font-size="5.60" font-weight="normal" fill="#444444" stroke="#444444" stroke-width="0.1" textLength="3.74" lengthAdjust="spacingAndGlyphs" >P</text>
<text x="851.12" y="128.20" font-size="5.60" font-weight="normal" fill="#444444" stroke="#444444" stroke-width="0.1" textLength="4.36" lengthAdjust="spacingAndGlyphs" >Q</text>
<text x="891.88" y="128.20" font-size="5.60" font-weight="normal" fill="#444444" stroke="#444444" stroke-width="0.1" textLength="4.04" lengthAdjust="spacingAndGlyphs" >R</text>
<text x="918.43" y="128.20" font-size="5.60" font-weight="normal" fill="#444444" stroke="#444444" stroke-width="0.1" textLength="3.74" lengthAdjust="spacingAndGlyphs" >S</text>
<path d="M4.8 128 h3.4 v-3.4 z" fill="#b4b4b4"/>
<line x1="11.70" y1="122.50" x2="11.70" y2="470.00" stroke="#c8c8c8" stroke-width="0.6" />
<rect x="0.00" y="129.60" width="11.70" height="340.40" fill="#E9E9E9" />
<rect x="11.70" y="129.90" width="916.70" height="340.10" fill="#FFFFFF" />
<rect x="11.70" y="129.90" width="916.70" height="58.30" fill="#E6E9ED" />
<rect x="11.70" y="188.20" width="916.70" height="7.83" fill="#0F1B2B" />
<line x1="0.00" y1="146.10" x2="11.70" y2="146.10" stroke="#cfcfcf" stroke-width="0.5" />
<line x1="0.00" y1="188.20" x2="11.70" y2="188.20" stroke="#cfcfcf" stroke-width="0.5" />
<text x="4.34" y="144.30" font-size="5.60" font-weight="normal" fill="#444" stroke="#444" stroke-width="0.1" textLength="3.11" lengthAdjust="spacingAndGlyphs" >1</text>
<text x="4.34" y="186.20" font-size="5.60" font-weight="normal" fill="#444" stroke="#444" stroke-width="0.1" textLength="3.11" lengthAdjust="spacingAndGlyphs" >2</text>
<line x1="0.00" y1="196.03" x2="11.70" y2="196.03" stroke="#cfcfcf" stroke-width="0.5" />
<text x="4.32" y="194.53" font-size="5.70" font-weight="normal" fill="#444" stroke="#444" stroke-width="0.12" textLength="3.17" lengthAdjust="spacingAndGlyphs" >3</text>
<line x1="0.00" y1="203.87" x2="11.70" y2="203.87" stroke="#cfcfcf" stroke-width="0.5" />
<text x="4.32" y="202.37" font-size="5.70" font-weight="normal" fill="#444" stroke="#444" stroke-width="0.12" textLength="3.17" lengthAdjust="spacingAndGlyphs" >4</text>
<line x1="0.00" y1="211.70" x2="11.70" y2="211.70" stroke="#cfcfcf" stroke-width="0.5" />
<text x="4.32" y="210.20" font-size="5.70" font-weight="normal" fill="#444" stroke="#444" stroke-width="0.12" textLength="3.17" lengthAdjust="spacingAndGlyphs" >5</text>
<line x1="0.00" y1="219.53" x2="11.70" y2="219.53" stroke="#cfcfcf" stroke-width="0.5" />
<text x="4.32" y="218.03" font-size="5.70" font-weight="normal" fill="#444" stroke="#444" stroke-width="0.12" textLength="3.17" lengthAdjust="spacingAndGlyphs" >6</text>
<line x1="0.00" y1="227.36" x2="11.70" y2="227.36" stroke="#cfcfcf" stroke-width="0.5" />
<text x="4.32" y="225.86" font-size="5.70" font-weight="normal" fill="#444" stroke="#444" stroke-width="0.12" textLength="3.17" lengthAdjust="spacingAndGlyphs" >7</text>
<line x1="0.00" y1="235.20" x2="11.70" y2="235.20" stroke="#cfcfcf" stroke-width="0.5" />
<text x="4.32" y="233.70" font-size="5.70" font-weight="normal" fill="#444" stroke="#444" stroke-width="0.12" textLength="3.17" lengthAdjust="spacingAndGlyphs" >8</text>
<line x1="0.00" y1="243.03" x2="11.70" y2="243.03" stroke="#cfcfcf" stroke-width="0.5" />
<text x="4.32" y="241.53" font-size="5.70" font-weight="normal" fill="#444" stroke="#444" stroke-width="0.12" textLength="3.17" lengthAdjust="spacingAndGlyphs" >9</text>
<line x1="0.00" y1="250.86" x2="11.70" y2="250.86" stroke="#cfcfcf" stroke-width="0.5" />
<text x="2.73" y="249.36" font-size="5.70" font-weight="normal" fill="#444" stroke="#444" stroke-width="0.12" textLength="6.34" lengthAdjust="spacingAndGlyphs" >10</text>
<line x1="0.00" y1="258.70" x2="11.70" y2="258.70" stroke="#cfcfcf" stroke-width="0.5" />
<text x="2.94" y="257.20" font-size="5.70" font-weight="normal" fill="#444" stroke="#444" stroke-width="0.12" textLength="5.92" lengthAdjust="spacingAndGlyphs" >11</text>
<line x1="0.00" y1="266.53" x2="11.70" y2="266.53" stroke="#cfcfcf" stroke-width="0.5" />
<text x="2.73" y="265.03" font-size="5.70" font-weight="normal" fill="#444" stroke="#444" stroke-width="0.12" textLength="6.34" lengthAdjust="spacingAndGlyphs" >12</text>
<line x1="0.00" y1="274.36" x2="11.70" y2="274.36" stroke="#cfcfcf" stroke-width="0.5" />
<text x="2.73" y="272.86" font-size="5.70" font-weight="normal" fill="#444" stroke="#444" stroke-width="0.12" textLength="6.34" lengthAdjust="spacingAndGlyphs" >13</text>
<line x1="0.00" y1="282.20" x2="11.70" y2="282.20" stroke="#cfcfcf" stroke-width="0.5" />
<text x="2.73" y="280.70" font-size="5.70" font-weight="normal" fill="#444" stroke="#444" stroke-width="0.12" textLength="6.34" lengthAdjust="spacingAndGlyphs" >14</text>
<line x1="0.00" y1="290.03" x2="11.70" y2="290.03" stroke="#cfcfcf" stroke-width="0.5" />
<text x="2.73" y="288.53" font-size="5.70" font-weight="normal" fill="#444" stroke="#444" stroke-width="0.12" textLength="6.34" lengthAdjust="spacingAndGlyphs" >15</text>
<line x1="0.00" y1="297.86" x2="11.70" y2="297.86" stroke="#cfcfcf" stroke-width="0.5" />
<text x="2.73" y="296.36" font-size="5.70" font-weight="normal" fill="#444" stroke="#444" stroke-width="0.12" textLength="6.34" lengthAdjust="spacingAndGlyphs" >16</text>
<line x1="0.00" y1="305.69" x2="11.70" y2="305.69" stroke="#cfcfcf" stroke-width="0.5" />
<text x="2.73" y="304.19" font-size="5.70" font-weight="normal" fill="#444" stroke="#444" stroke-width="0.12" textLength="6.34" lengthAdjust="spacingAndGlyphs" >17</text>
<line x1="0.00" y1="313.53" x2="11.70" y2="313.53" stroke="#cfcfcf" stroke-width="0.5" />
<text x="2.73" y="312.03" font-size="5.70" font-weight="normal" fill="#444" stroke="#444" stroke-width="0.12" textLength="6.34" lengthAdjust="spacingAndGlyphs" >18</text>
<line x1="0.00" y1="321.36" x2="11.70" y2="321.36" stroke="#cfcfcf" stroke-width="0.5" />
<text x="2.73" y="319.86" font-size="5.70" font-weight="normal" fill="#444" stroke="#444" stroke-width="0.12" textLength="6.34" lengthAdjust="spacingAndGlyphs" >19</text>
<line x1="0.00" y1="329.19" x2="11.70" y2="329.19" stroke="#cfcfcf" stroke-width="0.5" />
<text x="2.73" y="327.69" font-size="5.70" font-weight="normal" fill="#444" stroke="#444" stroke-width="0.12" textLength="6.34" lengthAdjust="spacingAndGlyphs" >20</text>
<line x1="0.00" y1="337.03" x2="11.70" y2="337.03" stroke="#cfcfcf" stroke-width="0.5" />
<text x="2.73" y="335.53" font-size="5.70" font-weight="normal" fill="#444" stroke="#444" stroke-width="0.12" textLength="6.34" lengthAdjust="spacingAndGlyphs" >21</text>
<line x1="0.00" y1="344.86" x2="11.70" y2="344.86" stroke="#cfcfcf" stroke-width="0.5" />
<text x="2.73" y="343.36" font-size="5.70" font-weight="normal" fill="#444" stroke="#444" stroke-width="0.12" textLength="6.34" lengthAdjust="spacingAndGlyphs" >22</text>
<line x1="0.00" y1="352.69" x2="11.70" y2="352.69" stroke="#cfcfcf" stroke-width="0.5" />
<text x="2.73" y="351.19" font-size="5.70" font-weight="normal" fill="#444" stroke="#444" stroke-width="0.12" textLength="6.34" lengthAdjust="spacingAndGlyphs" >23</text>
<line x1="0.00" y1="360.53" x2="11.70" y2="360.53" stroke="#cfcfcf" stroke-width="0.5" />
<text x="2.73" y="359.03" font-size="5.70" font-weight="normal" fill="#444" stroke="#444" stroke-width="0.12" textLength="6.34" lengthAdjust="spacingAndGlyphs" >24</text>
<line x1="0.00" y1="368.36" x2="11.70" y2="368.36" stroke="#cfcfcf" stroke-width="0.5" />
<text x="2.73" y="366.86" font-size="5.70" font-weight="normal" fill="#444" stroke="#444" stroke-width="0.12" textLength="6.34" lengthAdjust="spacingAndGlyphs" >25</text>
<line x1="0.00" y1="376.19" x2="11.70" y2="376.19" stroke="#cfcfcf" stroke-width="0.5" />
<text x="2.73" y="374.69" font-size="5.70" font-weight="normal" fill="#444" stroke="#444" stroke-width="0.12" textLength="6.34" lengthAdjust="spacingAndGlyphs" >26</text>
<line x1="0.00" y1="384.03" x2="11.70" y2="384.03" stroke="#cfcfcf" stroke-width="0.5" />
<text x="2.73" y="382.53" font-size="5.70" font-weight="normal" fill="#444" stroke="#444" stroke-width="0.12" textLength="6.34" lengthAdjust="spacingAndGlyphs" >27</text>
<line x1="0.00" y1="391.86" x2="11.70" y2="391.86" stroke="#cfcfcf" stroke-width="0.5" />
<text x="2.73" y="390.36" font-size="5.70" font-weight="normal" fill="#444" stroke="#444" stroke-width="0.12" textLength="6.34" lengthAdjust="spacingAndGlyphs" >28</text>
<line x1="0.00" y1="399.69" x2="11.70" y2="399.69" stroke="#cfcfcf" stroke-width="0.5" />
<text x="2.73" y="398.19" font-size="5.70" font-weight="normal" fill="#444" stroke="#444" stroke-width="0.12" textLength="6.34" lengthAdjust="spacingAndGlyphs" >29</text>
<line x1="0.00" y1="407.52" x2="11.70" y2="407.52" stroke="#cfcfcf" stroke-width="0.5" />
<text x="2.73" y="406.02" font-size="5.70" font-weight="normal" fill="#444" stroke="#444" stroke-width="0.12" textLength="6.34" lengthAdjust="spacingAndGlyphs" >30</text>
<line x1="0.00" y1="415.36" x2="11.70" y2="415.36" stroke="#cfcfcf" stroke-width="0.5" />
<text x="2.73" y="413.86" font-size="5.70" font-weight="normal" fill="#444" stroke="#444" stroke-width="0.12" textLength="6.34" lengthAdjust="spacingAndGlyphs" >31</text>
<line x1="0.00" y1="423.19" x2="11.70" y2="423.19" stroke="#cfcfcf" stroke-width="0.5" />
<text x="2.73" y="421.69" font-size="5.70" font-weight="normal" fill="#444" stroke="#444" stroke-width="0.12" textLength="6.34" lengthAdjust="spacingAndGlyphs" >32</text>
<line x1="0.00" y1="431.02" x2="11.70" y2="431.02" stroke="#cfcfcf" stroke-width="0.5" />
<text x="2.73" y="429.52" font-size="5.70" font-weight="normal" fill="#444" stroke="#444" stroke-width="0.12" textLength="6.34" lengthAdjust="spacingAndGlyphs" >33</text>
<line x1="0.00" y1="438.86" x2="11.70" y2="438.86" stroke="#cfcfcf" stroke-width="0.5" />
<text x="2.73" y="437.36" font-size="5.70" font-weight="normal" fill="#444" stroke="#444" stroke-width="0.12" textLength="6.34" lengthAdjust="spacingAndGlyphs" >34</text>
<line x1="0.00" y1="446.69" x2="11.70" y2="446.69" stroke="#cfcfcf" stroke-width="0.5" />
<text x="2.73" y="445.19" font-size="5.70" font-weight="normal" fill="#444" stroke="#444" stroke-width="0.12" textLength="6.34" lengthAdjust="spacingAndGlyphs" >35</text>
<line x1="0.00" y1="454.52" x2="11.70" y2="454.52" stroke="#cfcfcf" stroke-width="0.5" />
<text x="2.73" y="453.02" font-size="5.70" font-weight="normal" fill="#444" stroke="#444" stroke-width="0.12" textLength="6.34" lengthAdjust="spacingAndGlyphs" >36</text>
<line x1="0.00" y1="462.36" x2="11.70" y2="462.36" stroke="#cfcfcf" stroke-width="0.5" />
<text x="2.73" y="460.86" font-size="5.70" font-weight="normal" fill="#444" stroke="#444" stroke-width="0.12" textLength="6.34" lengthAdjust="spacingAndGlyphs" >37</text>
<line x1="0.00" y1="470.19" x2="11.70" y2="470.19" stroke="#cfcfcf" stroke-width="0.5" />
<text x="2.73" y="468.69" font-size="5.70" font-weight="normal" fill="#444" stroke="#444" stroke-width="0.12" textLength="6.34" lengthAdjust="spacingAndGlyphs" >38</text>
<line x1="11.70" y1="196.03" x2="928.40" y2="196.03" stroke="#DCDCDC" stroke-width="0.6" />
<line x1="11.70" y1="203.87" x2="928.40" y2="203.87" stroke="#DCDCDC" stroke-width="0.6" />
<line x1="11.70" y1="211.70" x2="928.40" y2="211.70" stroke="#DCDCDC" stroke-width="0.6" />
<line x1="11.70" y1="219.53" x2="928.40" y2="219.53" stroke="#DCDCDC" stroke-width="0.6" />
<line x1="11.70" y1="227.36" x2="928.40" y2="227.36" stroke="#DCDCDC" stroke-width="0.6" />
<line x1="11.70" y1="235.20" x2="928.40" y2="235.20" stroke="#DCDCDC" stroke-width="0.6" />
<line x1="11.70" y1="243.03" x2="928.40" y2="243.03" stroke="#DCDCDC" stroke-width="0.6" />
<line x1="11.70" y1="250.86" x2="928.40" y2="250.86" stroke="#DCDCDC" stroke-width="0.6" />
<line x1="11.70" y1="258.70" x2="928.40" y2="258.70" stroke="#DCDCDC" stroke-width="0.6" />
<line x1="11.70" y1="266.53" x2="928.40" y2="266.53" stroke="#DCDCDC" stroke-width="0.6" />
<line x1="11.70" y1="274.36" x2="928.40" y2="274.36" stroke="#DCDCDC" stroke-width="0.6" />
<line x1="11.70" y1="282.20" x2="928.40" y2="282.20" stroke="#DCDCDC" stroke-width="0.6" />
<line x1="11.70" y1="290.03" x2="928.40" y2="290.03" stroke="#DCDCDC" stroke-width="0.6" />
<line x1="11.70" y1="297.86" x2="928.40" y2="297.86" stroke="#DCDCDC" stroke-width="0.6" />
<line x1="11.70" y1="305.69" x2="928.40" y2="305.69" stroke="#DCDCDC" stroke-width="0.6" />
<line x1="11.70" y1="313.53" x2="928.40" y2="313.53" stroke="#DCDCDC" stroke-width="0.6" />
<line x1="11.70" y1="321.36" x2="928.40" y2="321.36" stroke="#DCDCDC" stroke-width="0.6" />
<line x1="11.70" y1="329.19" x2="928.40" y2="329.19" stroke="#DCDCDC" stroke-width="0.6" />
<line x1="11.70" y1="337.03" x2="928.40" y2="337.03" stroke="#DCDCDC" stroke-width="0.6" />
<line x1="11.70" y1="344.86" x2="928.40" y2="344.86" stroke="#DCDCDC" stroke-width="0.6" />
<line x1="11.70" y1="352.69" x2="928.40" y2="352.69" stroke="#DCDCDC" stroke-width="0.6" />
<line x1="11.70" y1="360.53" x2="928.40" y2="360.53" stroke="#DCDCDC" stroke-width="0.6" />
<line x1="11.70" y1="368.36" x2="928.40" y2="368.36" stroke="#DCDCDC" stroke-width="0.6" />
<line x1="11.70" y1="376.19" x2="928.40" y2="376.19" stroke="#DCDCDC" stroke-width="0.6" />
<line x1="11.70" y1="384.02" x2="928.40" y2="384.02" stroke="#DCDCDC" stroke-width="0.6" />
<line x1="11.70" y1="391.86" x2="928.40" y2="391.86" stroke="#DCDCDC" stroke-width="0.6" />
<line x1="11.70" y1="399.69" x2="928.40" y2="399.69" stroke="#DCDCDC" stroke-width="0.6" />
<line x1="11.70" y1="407.52" x2="928.40" y2="407.52" stroke="#DCDCDC" stroke-width="0.6" />
<line x1="11.70" y1="415.36" x2="928.40" y2="415.36" stroke="#DCDCDC" stroke-width="0.6" />
<line x1="11.70" y1="423.19" x2="928.40" y2="423.19" stroke="#DCDCDC" stroke-width="0.6" />
<line x1="11.70" y1="431.02" x2="928.40" y2="431.02" stroke="#DCDCDC" stroke-width="0.6" />
<line x1="11.70" y1="438.86" x2="928.40" y2="438.86" stroke="#DCDCDC" stroke-width="0.6" />
<line x1="11.70" y1="446.69" x2="928.40" y2="446.69" stroke="#DCDCDC" stroke-width="0.6" />
<line x1="11.70" y1="454.52" x2="928.40" y2="454.52" stroke="#DCDCDC" stroke-width="0.6" />
<line x1="11.70" y1="462.36" x2="928.40" y2="462.36" stroke="#DCDCDC" stroke-width="0.6" />
<line x1="11.70" y1="470.00" x2="928.40" y2="470.00" stroke="#DCDCDC" stroke-width="0.6" />
<line x1="58.60" y1="196.03" x2="58.60" y2="470.00" stroke="#DCDCDC" stroke-width="0.6" />
<line x1="113.50" y1="196.03" x2="113.50" y2="470.00" stroke="#DCDCDC" stroke-width="0.6" />
<line x1="166.50" y1="196.03" x2="166.50" y2="470.00" stroke="#DCDCDC" stroke-width="0.6" />
<line x1="213.50" y1="196.03" x2="213.50" y2="470.00" stroke="#DCDCDC" stroke-width="0.6" />
<line x1="271.20" y1="196.03" x2="271.20" y2="470.00" stroke="#DCDCDC" stroke-width="0.6" />
<line x1="324.30" y1="196.03" x2="324.30" y2="470.00" stroke="#DCDCDC" stroke-width="0.6" />
<line x1="363.30" y1="196.03" x2="363.30" y2="470.00" stroke="#DCDCDC" stroke-width="0.6" />
<line x1="432.40" y1="196.03" x2="432.40" y2="470.00" stroke="#DCDCDC" stroke-width="0.6" />
<line x1="479.90" y1="196.03" x2="479.90" y2="470.00" stroke="#DCDCDC" stroke-width="0.6" />
<line x1="528.40" y1="196.03" x2="528.40" y2="470.00" stroke="#DCDCDC" stroke-width="0.6" />
<line x1="582.80" y1="196.03" x2="582.80" y2="470.00" stroke="#DCDCDC" stroke-width="0.6" />
<line x1="625.30" y1="196.03" x2="625.30" y2="470.00" stroke="#DCDCDC" stroke-width="0.6" />
<line x1="678.40" y1="196.03" x2="678.40" y2="470.00" stroke="#DCDCDC" stroke-width="0.6" />
<line x1="731.10" y1="196.03" x2="731.10" y2="470.00" stroke="#DCDCDC" stroke-width="0.6" />
<line x1="780.40" y1="196.03" x2="780.40" y2="470.00" stroke="#DCDCDC" stroke-width="0.6" />
<line x1="829.40" y1="196.03" x2="829.40" y2="470.00" stroke="#DCDCDC" stroke-width="0.6" />
<line x1="877.20" y1="196.03" x2="877.20" y2="470.00" stroke="#DCDCDC" stroke-width="0.6" />
<line x1="910.60" y1="196.03" x2="910.60" y2="470.00" stroke="#DCDCDC" stroke-width="0.6" />
<g fill="none" stroke="#141a2b" stroke-width="2.25" stroke-linejoin="round"><path d="M13.8 139.7 H20.2 A3.2 3.95 0 1 0 19.5 142.4"/><ellipse cx="26.9" cy="139.55" rx="3.2" ry="3.95"/><path d="M31.1 134.6 V147.4"/><path d="M33.6 134.6 L37.2 143.6 L40.8 134.6"/><path d="M44.9 134.6 V144.5"/><path d="M54.1 136.6 C53.6 135.4 52.5 135.5 51.3 135.5 C49.7 135.5 48.6 136 48.6 137.2 C48.6 138.5 49.7 138.9 51.3 139.3 C53 139.7 54 140.3 54 141.8 C54 143.2 52.9 143.6 51.3 143.6 C49.8 143.6 48.7 143.2 48.1 142"/><path d="M58.5 133.3 V142 Q58.5 143.6 60.1 143.6 H62"/><path d="M56.1 136.2 H61.6"/><ellipse cx="67.4" cy="139.55" rx="2.9" ry="3.95"/><path d="M71.3 134.6 V144.5"/></g><circle cx="44.9" cy="132.5" r="1.15" fill="#141a2b"/>
<text x="12.50" y="168.90" font-size="6.20" font-weight="normal" fill="#5d6290" stroke="#5d6290" stroke-width="0.18" textLength="78.50" lengthAdjust="spacingAndGlyphs" >Company common equity grants</text>
<text x="12.50" y="194.10" font-size="5.90" font-weight="bold" fill="#ffffff" textLength="34.70" lengthAdjust="spacingAndGlyphs" >Security name</text>
<text x="59.30" y="194.10" font-size="5.90" font-weight="bold" fill="#ffffff" textLength="44.10" lengthAdjust="spacingAndGlyphs" >Shareholder name</text>
<text x="114.90" y="194.10" font-size="5.90" font-weight="bold" fill="#ffffff" textLength="28.80" lengthAdjust="spacingAndGlyphs" >Grant name</text>
<text x="167.20" y="194.10" font-size="5.90" font-weight="bold" fill="#ffffff" textLength="37.00" lengthAdjust="spacingAndGlyphs" >Shares amount</text>
<text x="214.60" y="194.10" font-size="5.90" font-weight="bold" fill="#ffffff" textLength="42.60" lengthAdjust="spacingAndGlyphs" >Available amount</text>
<text x="271.70" y="194.10" font-size="5.90" font-weight="bold" fill="#ffffff" textLength="43.60" lengthAdjust="spacingAndGlyphs" >Price per shares $</text>
<text x="325.60" y="194.10" font-size="5.90" font-weight="bold" fill="#ffffff" textLength="27.60" lengthAdjust="spacingAndGlyphs" >Issued date</text>
<text x="364.10" y="194.10" font-size="5.90" font-weight="bold" fill="#ffffff" textLength="45.30" lengthAdjust="spacingAndGlyphs" >Vesting plan name</text>
<text x="434.20" y="194.10" font-size="5.90" font-weight="bold" fill="#ffffff" textLength="34.10" lengthAdjust="spacingAndGlyphs" >Shares vested</text>
<text x="481.50" y="194.10" font-size="5.90" font-weight="bold" fill="#ffffff" textLength="42.90" lengthAdjust="spacingAndGlyphs" >Vesting start date</text>
<text x="529.50" y="194.10" font-size="5.90" font-weight="bold" fill="#ffffff" textLength="45.00" lengthAdjust="spacingAndGlyphs" >Shares transferred</text>
<text x="584.00" y="194.10" font-size="5.90" font-weight="bold" fill="#ffffff" textLength="33.00" lengthAdjust="spacingAndGlyphs" >Transfer date</text>
<text x="626.20" y="194.10" font-size="5.90" font-weight="bold" fill="#ffffff" textLength="26.60" lengthAdjust="spacingAndGlyphs" >Transfer to</text>
<text x="679.40" y="194.10" font-size="5.90" font-weight="bold" fill="#ffffff" textLength="44.60" lengthAdjust="spacingAndGlyphs" >Shares repurchase</text>
<text x="732.10" y="194.10" font-size="5.90" font-weight="bold" fill="#ffffff" textLength="41.10" lengthAdjust="spacingAndGlyphs" >Repurchase date</text>
<text x="782.10" y="194.10" font-size="5.90" font-weight="bold" fill="#ffffff" textLength="40.20" lengthAdjust="spacingAndGlyphs" >Shares cancelled</text>
<text x="830.40" y="194.10" font-size="5.90" font-weight="bold" fill="#ffffff" textLength="40.50" lengthAdjust="spacingAndGlyphs" >Cancelation date</text>
<text x="878.00" y="194.10" font-size="5.90" font-weight="bold" fill="#ffffff" textLength="26.90" lengthAdjust="spacingAndGlyphs" >Ownership</text>
<text x="911.70" y="194.10" font-size="5.90" font-weight="bold" fill="#ffffff" textLength="14.00" lengthAdjust="spacingAndGlyphs" >Notes</text>
<text x="12.70" y="202.32" font-size="6.10" font-weight="normal" fill="#262626" stroke="#262626" stroke-width="0.1" textLength="24.08" lengthAdjust="spacingAndGlyphs" >Founders</text>
<text x="59.60" y="202.32" font-size="6.10" font-weight="normal" fill="#262626" stroke="#262626" stroke-width="0.1" textLength="39.61" lengthAdjust="spacingAndGlyphs" >Peter Anderson</text>
<text x="114.50" y="202.32" font-size="6.10" font-weight="normal" fill="#262626" stroke="#262626" stroke-width="0.1" textLength="13.86" lengthAdjust="spacingAndGlyphs" >F-001</text>
<text x="189.02" y="202.32" font-size="6.10" font-weight="normal" fill="#262626" stroke="#262626" stroke-width="0.1" textLength="23.08" lengthAdjust="spacingAndGlyphs" >10,000.00</text>
<text x="246.72" y="202.32" font-size="6.10" font-weight="normal" fill="#262626" stroke="#262626" stroke-width="0.1" textLength="23.08" lengthAdjust="spacingAndGlyphs" >10,000.00</text>
<text x="312.81" y="202.32" font-size="6.10" font-weight="normal" fill="#262626" stroke="#262626" stroke-width="0.1" textLength="10.10" lengthAdjust="spacingAndGlyphs" >0.01</text>
<text x="325.30" y="202.32" font-size="6.10" font-weight="normal" fill="#262626" stroke="#262626" stroke-width="0.1" textLength="26.53" lengthAdjust="spacingAndGlyphs" >12-14-2023</text>
<text x="880.07" y="202.32" font-size="6.10" font-weight="normal" fill="#262626" stroke="#262626" stroke-width="0.1" textLength="29.13" lengthAdjust="spacingAndGlyphs" >20.955609%</text>
<text x="12.70" y="210.15" font-size="6.10" font-weight="normal" fill="#262626" stroke="#262626" stroke-width="0.1" textLength="24.08" lengthAdjust="spacingAndGlyphs" >Founders</text>
<text x="59.60" y="210.15" font-size="6.10" font-weight="normal" fill="#262626" stroke="#262626" stroke-width="0.1" textLength="33.58" lengthAdjust="spacingAndGlyphs" >Rosa Francis</text>
<text x="114.50" y="210.15" font-size="6.10" font-weight="normal" fill="#262626" stroke="#262626" stroke-width="0.1" textLength="13.86" lengthAdjust="spacingAndGlyphs" >F-003</text>
<text x="191.91" y="210.15" font-size="6.10" font-weight="normal" fill="#262626" stroke="#262626" stroke-width="0.1" textLength="20.19" lengthAdjust="spacingAndGlyphs" >5,229.38</text>
<text x="249.61" y="210.15" font-size="6.10" font-weight="normal" fill="#262626" stroke="#262626" stroke-width="0.1" textLength="20.19" lengthAdjust="spacingAndGlyphs" >5,229.38</text>
<text x="307.03" y="210.15" font-size="6.10" font-weight="normal" fill="#262626" stroke="#262626" stroke-width="0.1" textLength="15.87" lengthAdjust="spacingAndGlyphs" >0.2092</text>
<text x="325.30" y="210.15" font-size="6.10" font-weight="normal" fill="#262626" stroke="#262626" stroke-width="0.1" textLength="26.53" lengthAdjust="spacingAndGlyphs" >02-26-2025</text>
<text x="880.07" y="210.15" font-size="6.10" font-weight="normal" fill="#262626" stroke="#262626" stroke-width="0.1" textLength="29.13" lengthAdjust="spacingAndGlyphs" >10.958484%</text>
<text x="12.70" y="217.98" font-size="6.10" font-weight="normal" fill="#262626" stroke="#262626" stroke-width="0.1" textLength="24.08" lengthAdjust="spacingAndGlyphs" >Founders</text>
<text x="59.60" y="217.98" font-size="6.10" font-weight="normal" fill="#262626" stroke="#262626" stroke-width="0.1" textLength="34.85" lengthAdjust="spacingAndGlyphs" >Louis Richard</text>
<text x="114.50" y="217.98" font-size="6.10" font-weight="normal" fill="#262626" stroke="#262626" stroke-width="0.1" textLength="13.86" lengthAdjust="spacingAndGlyphs" >F-004</text>
<text x="191.91" y="217.98" font-size="6.10" font-weight="normal" fill="#262626" stroke="#262626" stroke-width="0.1" textLength="20.19" lengthAdjust="spacingAndGlyphs" >1,000.00</text>
<text x="259.71" y="217.98" font-size="6.10" font-weight="normal" fill="#262626" stroke="#262626" stroke-width="0.1" textLength="10.10" lengthAdjust="spacingAndGlyphs" >0.00</text>
<text x="312.81" y="217.98" font-size="6.10" font-weight="normal" fill="#262626" stroke="#262626" stroke-width="0.1" textLength="10.10" lengthAdjust="spacingAndGlyphs" >0.05</text>
<text x="325.30" y="217.98" font-size="6.10" font-weight="normal" fill="#262626" stroke="#262626" stroke-width="0.1" textLength="26.53" lengthAdjust="spacingAndGlyphs" >02-01-2025</text>
<text x="679.40" y="217.98" font-size="6.10" font-weight="normal" fill="#262626" stroke="#262626" stroke-width="0.1" textLength="20.19" lengthAdjust="spacingAndGlyphs" >1,000.00</text>
<text x="732.10" y="217.98" font-size="6.10" font-weight="normal" fill="#262626" stroke="#262626" stroke-width="0.1" textLength="26.53" lengthAdjust="spacingAndGlyphs" >02-26-2025</text>
<text x="894.49" y="217.98" font-size="6.10" font-weight="normal" fill="#262626" stroke="#262626" stroke-width="0.1" textLength="14.71" lengthAdjust="spacingAndGlyphs" >0.00%</text>
<text x="12.70" y="225.81" font-size="6.10" font-weight="normal" fill="#262626" stroke="#262626" stroke-width="0.1" textLength="24.08" lengthAdjust="spacingAndGlyphs" >Founders</text>
<text x="59.60" y="225.81" font-size="6.10" font-weight="normal" fill="#262626" stroke="#262626" stroke-width="0.1" textLength="34.85" lengthAdjust="spacingAndGlyphs" >Louis Richard</text>
<text x="114.50" y="225.81" font-size="6.10" font-weight="normal" fill="#262626" stroke="#262626" stroke-width="0.1" textLength="47.12" lengthAdjust="spacingAndGlyphs" >Trans from SA-004</text>
<text x="191.91" y="225.81" font-size="6.10" font-weight="normal" fill="#262626" stroke="#262626" stroke-width="0.1" textLength="20.19" lengthAdjust="spacingAndGlyphs" >1,000.00</text>
<text x="249.61" y="225.81" font-size="6.10" font-weight="normal" fill="#262626" stroke="#262626" stroke-width="0.1" textLength="20.19" lengthAdjust="spacingAndGlyphs" >1,000.00</text>
<text x="312.81" y="225.81" font-size="6.10" font-weight="normal" fill="#262626" stroke="#262626" stroke-width="0.1" textLength="10.10" lengthAdjust="spacingAndGlyphs" >0.05</text>
<text x="325.30" y="225.81" font-size="6.10" font-weight="normal" fill="#262626" stroke="#262626" stroke-width="0.1" textLength="26.53" lengthAdjust="spacingAndGlyphs" >02-26-2025</text>
<text x="882.95" y="225.81" font-size="6.10" font-weight="normal" fill="#262626" stroke="#262626" stroke-width="0.1" textLength="26.25" lengthAdjust="spacingAndGlyphs" >2.095561%</text>
<text x="12.70" y="233.65" font-size="6.10" font-weight="normal" fill="#262626" stroke="#262626" stroke-width="0.1" textLength="24.08" lengthAdjust="spacingAndGlyphs" >Founders</text>
<text x="59.60" y="233.65" font-size="6.10" font-weight="normal" fill="#262626" stroke="#262626" stroke-width="0.1" textLength="27.55" lengthAdjust="spacingAndGlyphs" >Amy White</text>
<text x="114.50" y="233.65" font-size="6.10" font-weight="normal" fill="#262626" stroke="#262626" stroke-width="0.1" textLength="13.86" lengthAdjust="spacingAndGlyphs" >F-005</text>
<text x="191.91" y="233.65" font-size="6.10" font-weight="normal" fill="#262626" stroke="#262626" stroke-width="0.1" textLength="20.19" lengthAdjust="spacingAndGlyphs" >1,000.00</text>
<text x="259.71" y="233.65" font-size="6.10" font-weight="normal" fill="#262626" stroke="#262626" stroke-width="0.1" textLength="10.10" lengthAdjust="spacingAndGlyphs" >0.00</text>
<text x="312.81" y="233.65" font-size="6.10" font-weight="normal" fill="#262626" stroke="#262626" stroke-width="0.1" textLength="10.10" lengthAdjust="spacingAndGlyphs" >0.05</text>
<text x="325.30" y="233.65" font-size="6.10" font-weight="normal" fill="#262626" stroke="#262626" stroke-width="0.1" textLength="26.53" lengthAdjust="spacingAndGlyphs" >01-01-2025</text>
<text x="529.40" y="233.65" font-size="6.10" font-weight="normal" fill="#262626" stroke="#262626" stroke-width="0.1" textLength="20.19" lengthAdjust="spacingAndGlyphs" >1,000.00</text>
<text x="583.80" y="233.65" font-size="6.10" font-weight="normal" fill="#262626" stroke="#262626" stroke-width="0.1" textLength="26.53" lengthAdjust="spacingAndGlyphs" >02-26-2025</text>
<text x="626.30" y="233.65" font-size="6.10" font-weight="normal" fill="#262626" stroke="#262626" stroke-width="0.1" textLength="43.00" lengthAdjust="spacingAndGlyphs" >Trans from F-005</text>
<text x="894.49" y="233.65" font-size="6.10" font-weight="normal" fill="#262626" stroke="#262626" stroke-width="0.1" textLength="14.71" lengthAdjust="spacingAndGlyphs" >0.00%</text>
<text x="12.70" y="241.48" font-size="6.10" font-weight="normal" fill="#262626" stroke="#262626" stroke-width="0.1" textLength="24.08" lengthAdjust="spacingAndGlyphs" >Founders</text>
<text x="59.60" y="241.48" font-size="6.10" font-weight="normal" fill="#262626" stroke="#262626" stroke-width="0.1" textLength="33.58" lengthAdjust="spacingAndGlyphs" >Rosa Francis</text>
<text x="114.50" y="241.48" font-size="6.10" font-weight="normal" fill="#262626" stroke="#262626" stroke-width="0.1" textLength="47.12" lengthAdjust="spacingAndGlyphs" >Trans from SA-008</text>
<text x="191.91" y="241.48" font-size="6.10" font-weight="normal" fill="#262626" stroke="#262626" stroke-width="0.1" textLength="20.19" lengthAdjust="spacingAndGlyphs" >1,000.00</text>
<text x="249.61" y="241.48" font-size="6.10" font-weight="normal" fill="#262626" stroke="#262626" stroke-width="0.1" textLength="20.19" lengthAdjust="spacingAndGlyphs" >1,000.00</text>
<text x="312.81" y="241.48" font-size="6.10" font-weight="normal" fill="#262626" stroke="#262626" stroke-width="0.1" textLength="10.10" lengthAdjust="spacingAndGlyphs" >0.05</text>
<text x="325.30" y="241.48" font-size="6.10" font-weight="normal" fill="#262626" stroke="#262626" stroke-width="0.1" textLength="26.53" lengthAdjust="spacingAndGlyphs" >11-05-2025</text>
<text x="882.95" y="241.48" font-size="6.10" font-weight="normal" fill="#262626" stroke="#262626" stroke-width="0.1" textLength="26.25" lengthAdjust="spacingAndGlyphs" >2.095561%</text>
<text x="12.70" y="249.31" font-size="6.10" font-weight="normal" fill="#262626" stroke="#262626" stroke-width="0.1" textLength="24.08" lengthAdjust="spacingAndGlyphs" >Founders</text>
<text x="59.60" y="249.31" font-size="6.10" font-weight="normal" fill="#262626" stroke="#262626" stroke-width="0.1" textLength="28.52" lengthAdjust="spacingAndGlyphs" >Annie John</text>
<text x="114.50" y="249.31" font-size="6.10" font-weight="normal" fill="#262626" stroke="#262626" stroke-width="0.1" textLength="44.90" lengthAdjust="spacingAndGlyphs" >Exer from SO-003</text>
<text x="191.91" y="249.31" font-size="6.10" font-weight="normal" fill="#262626" stroke="#262626" stroke-width="0.1" textLength="20.19" lengthAdjust="spacingAndGlyphs" >1,000.00</text>
<text x="249.61" y="249.31" font-size="6.10" font-weight="normal" fill="#262626" stroke="#262626" stroke-width="0.1" textLength="20.19" lengthAdjust="spacingAndGlyphs" >1,000.00</text>
<text x="312.81" y="249.31" font-size="6.10" font-weight="normal" fill="#262626" stroke="#262626" stroke-width="0.1" textLength="10.10" lengthAdjust="spacingAndGlyphs" >0.05</text>
<text x="325.30" y="249.31" font-size="6.10" font-weight="normal" fill="#262626" stroke="#262626" stroke-width="0.1" textLength="26.53" lengthAdjust="spacingAndGlyphs" >11-05-2025</text>
<text x="882.95" y="249.31" font-size="6.10" font-weight="normal" fill="#262626" stroke="#262626" stroke-width="0.1" textLength="26.25" lengthAdjust="spacingAndGlyphs" >2.095561%</text>
<text x="12.70" y="257.15" font-size="6.10" font-weight="normal" fill="#262626" stroke="#262626" stroke-width="0.1" textLength="24.08" lengthAdjust="spacingAndGlyphs" >Founders</text>
<text x="59.60" y="257.15" font-size="6.10" font-weight="normal" fill="#262626" stroke="#262626" stroke-width="0.1" textLength="27.55" lengthAdjust="spacingAndGlyphs" >Amy White</text>
<text x="114.50" y="257.15" font-size="6.10" font-weight="normal" fill="#262626" stroke="#262626" stroke-width="0.1" textLength="47.12" lengthAdjust="spacingAndGlyphs" >Trans from SA-007</text>
<text x="196.23" y="257.15" font-size="6.10" font-weight="normal" fill="#262626" stroke="#262626" stroke-width="0.1" textLength="15.87" lengthAdjust="spacingAndGlyphs" >500.00</text>
<text x="253.93" y="257.15" font-size="6.10" font-weight="normal" fill="#262626" stroke="#262626" stroke-width="0.1" textLength="15.87" lengthAdjust="spacingAndGlyphs" >500.00</text>
<text x="312.81" y="257.15" font-size="6.10" font-weight="normal" fill="#262626" stroke="#262626" stroke-width="0.1" textLength="10.10" lengthAdjust="spacingAndGlyphs" >0.05</text>
<text x="325.30" y="257.15" font-size="6.10" font-weight="normal" fill="#262626" stroke="#262626" stroke-width="0.1" textLength="26.53" lengthAdjust="spacingAndGlyphs" >11-05-2025</text>
<text x="885.84" y="257.15" font-size="6.10" font-weight="normal" fill="#262626" stroke="#262626" stroke-width="0.1" textLength="23.36" lengthAdjust="spacingAndGlyphs" >1.04778%</text>
<text x="12.70" y="264.98" font-size="6.10" font-weight="normal" fill="#262626" stroke="#262626" stroke-width="0.1" textLength="24.08" lengthAdjust="spacingAndGlyphs" >Founders</text>
<text x="59.60" y="264.98" font-size="6.10" font-weight="normal" fill="#262626" stroke="#262626" stroke-width="0.1" textLength="34.85" lengthAdjust="spacingAndGlyphs" >Louis Richard</text>
<text x="114.50" y="264.98" font-size="6.10" font-weight="normal" fill="#262626" stroke="#262626" stroke-width="0.1" textLength="47.12" lengthAdjust="spacingAndGlyphs" >Trans from SB-007</text>
<text x="191.91" y="264.98" font-size="6.10" font-weight="normal" fill="#262626" stroke="#262626" stroke-width="0.1" textLength="20.19" lengthAdjust="spacingAndGlyphs" >1,000.00</text>
<text x="249.61" y="264.98" font-size="6.10" font-weight="normal" fill="#262626" stroke="#262626" stroke-width="0.1" textLength="20.19" lengthAdjust="spacingAndGlyphs" >1,000.00</text>
<text x="312.81" y="264.98" font-size="6.10" font-weight="normal" fill="#262626" stroke="#262626" stroke-width="0.1" textLength="10.10" lengthAdjust="spacingAndGlyphs" >0.05</text>
<text x="325.30" y="264.98" font-size="6.10" font-weight="normal" fill="#262626" stroke="#262626" stroke-width="0.1" textLength="26.53" lengthAdjust="spacingAndGlyphs" >12-08-2025</text>
<text x="882.95" y="264.98" font-size="6.10" font-weight="normal" fill="#262626" stroke="#262626" stroke-width="0.1" textLength="26.25" lengthAdjust="spacingAndGlyphs" >2.095561%</text>
<text x="12.70" y="272.81" font-size="6.10" font-weight="normal" fill="#262626" stroke="#262626" stroke-width="0.1" textLength="24.08" lengthAdjust="spacingAndGlyphs" >Founders</text>
<text x="59.60" y="272.81" font-size="6.10" font-weight="normal" fill="#262626" stroke="#262626" stroke-width="0.1" textLength="33.58" lengthAdjust="spacingAndGlyphs" >Rosa Francis</text>
<text x="114.50" y="272.81" font-size="6.10" font-weight="normal" fill="#262626" stroke="#262626" stroke-width="0.1" textLength="13.86" lengthAdjust="spacingAndGlyphs" >F-007</text>
<text x="187.58" y="272.81" font-size="6.10" font-weight="normal" fill="#262626" stroke="#262626" stroke-width="0.1" textLength="24.52" lengthAdjust="spacingAndGlyphs" >51.204424</text>
<text x="245.28" y="272.81" font-size="6.10" font-weight="normal" fill="#262626" stroke="#262626" stroke-width="0.1" textLength="24.52" lengthAdjust="spacingAndGlyphs" >51.204424</text>
<text x="298.38" y="272.81" font-size="6.10" font-weight="normal" fill="#262626" stroke="#262626" stroke-width="0.1" textLength="24.52" lengthAdjust="spacingAndGlyphs" >234.35475</text>
<text x="325.30" y="272.81" font-size="6.10" font-weight="normal" fill="#262626" stroke="#262626" stroke-width="0.1" textLength="26.53" lengthAdjust="spacingAndGlyphs" >12-17-2025</text>
<text x="882.95" y="272.81" font-size="6.10" font-weight="normal" fill="#262626" stroke="#262626" stroke-width="0.1" textLength="26.25" lengthAdjust="spacingAndGlyphs" >0.107302%</text>
<text x="12.70" y="280.65" font-size="6.10" font-weight="normal" fill="#262626" stroke="#262626" stroke-width="0.1" textLength="24.08" lengthAdjust="spacingAndGlyphs" >Founders</text>
<text x="59.60" y="280.65" font-size="6.10" font-weight="normal" fill="#262626" stroke="#262626" stroke-width="0.1" textLength="28.52" lengthAdjust="spacingAndGlyphs" >Annie John</text>
<text x="114.50" y="280.65" font-size="6.10" font-weight="normal" fill="#262626" stroke="#262626" stroke-width="0.1" textLength="13.86" lengthAdjust="spacingAndGlyphs" >F-008</text>
<text x="184.70" y="280.65" font-size="6.10" font-weight="normal" fill="#262626" stroke="#262626" stroke-width="0.1" textLength="27.40" lengthAdjust="spacingAndGlyphs" >854.441502</text>
<text x="242.40" y="280.65" font-size="6.10" font-weight="normal" fill="#262626" stroke="#262626" stroke-width="0.1" textLength="27.40" lengthAdjust="spacingAndGlyphs" >854.441502</text>
<text x="298.38" y="280.65" font-size="6.10" font-weight="normal" fill="#262626" stroke="#262626" stroke-width="0.1" textLength="24.52" lengthAdjust="spacingAndGlyphs" >23.407103</text>
<text x="325.30" y="280.65" font-size="6.10" font-weight="normal" fill="#262626" stroke="#262626" stroke-width="0.1" textLength="26.53" lengthAdjust="spacingAndGlyphs" >12-19-2025</text>
<text x="882.95" y="280.65" font-size="6.10" font-weight="normal" fill="#262626" stroke="#262626" stroke-width="0.1" textLength="26.25" lengthAdjust="spacingAndGlyphs" >1.790534%</text>
<text x="12.70" y="288.48" font-size="6.10" font-weight="normal" fill="#262626" stroke="#262626" stroke-width="0.1" textLength="24.08" lengthAdjust="spacingAndGlyphs" >Founders</text>
<text x="59.60" y="288.48" font-size="6.10" font-weight="normal" fill="#262626" stroke="#262626" stroke-width="0.1" textLength="28.83" lengthAdjust="spacingAndGlyphs" >Steve Mark</text>
<text x="114.50" y="288.48" font-size="6.10" font-weight="normal" fill="#262626" stroke="#262626" stroke-width="0.1" textLength="16.75" lengthAdjust="spacingAndGlyphs" >F-0010</text>
<text x="187.58" y="288.48" font-size="6.10" font-weight="normal" fill="#262626" stroke="#262626" stroke-width="0.1" textLength="24.52" lengthAdjust="spacingAndGlyphs" >653.77721</text>
<text x="245.28" y="288.48" font-size="6.10" font-weight="normal" fill="#262626" stroke="#262626" stroke-width="0.1" textLength="24.52" lengthAdjust="spacingAndGlyphs" >653.77721</text>
<text x="298.38" y="288.48" font-size="6.10" font-weight="normal" fill="#262626" stroke="#262626" stroke-width="0.1" textLength="24.52" lengthAdjust="spacingAndGlyphs" >22.948596</text>
<text x="325.30" y="288.48" font-size="6.10" font-weight="normal" fill="#262626" stroke="#262626" stroke-width="0.1" textLength="26.53" lengthAdjust="spacingAndGlyphs" >12-19-2025</text>
<text x="885.84" y="288.48" font-size="6.10" font-weight="normal" fill="#262626" stroke="#262626" stroke-width="0.1" textLength="23.36" lengthAdjust="spacingAndGlyphs" >1.37003%</text>
<text x="12.70" y="296.31" font-size="6.10" font-weight="normal" fill="#262626" stroke="#262626" stroke-width="0.1" textLength="24.08" lengthAdjust="spacingAndGlyphs" >Founders</text>
<text x="59.60" y="296.31" font-size="6.10" font-weight="normal" fill="#262626" stroke="#262626" stroke-width="0.1" textLength="27.57" lengthAdjust="spacingAndGlyphs" >Clare John</text>
<text x="114.50" y="296.31" font-size="6.10" font-weight="normal" fill="#262626" stroke="#262626" stroke-width="0.1" textLength="13.86" lengthAdjust="spacingAndGlyphs" >F-011</text>
<text x="191.91" y="296.31" font-size="6.10" font-weight="normal" fill="#262626" stroke="#262626" stroke-width="0.1" textLength="20.19" lengthAdjust="spacingAndGlyphs" >1,000.00</text>
<text x="259.71" y="296.31" font-size="6.10" font-weight="normal" fill="#262626" stroke="#262626" stroke-width="0.1" textLength="10.10" lengthAdjust="spacingAndGlyphs" >0.00</text>
<text x="312.81" y="296.31" font-size="6.10" font-weight="normal" fill="#262626" stroke="#262626" stroke-width="0.1" textLength="10.10" lengthAdjust="spacingAndGlyphs" >0.07</text>
<text x="325.30" y="296.31" font-size="6.10" font-weight="normal" fill="#262626" stroke="#262626" stroke-width="0.1" textLength="26.53" lengthAdjust="spacingAndGlyphs" >03-07-2026</text>
<text x="529.40" y="296.31" font-size="6.10" font-weight="normal" fill="#262626" stroke="#262626" stroke-width="0.1" textLength="20.19" lengthAdjust="spacingAndGlyphs" >1,000.00</text>
<text x="583.80" y="296.31" font-size="6.10" font-weight="normal" fill="#262626" stroke="#262626" stroke-width="0.1" textLength="26.53" lengthAdjust="spacingAndGlyphs" >03-07-2026</text>
<text x="626.30" y="296.31" font-size="6.10" font-weight="normal" fill="#262626" stroke="#262626" stroke-width="0.1" textLength="43.00" lengthAdjust="spacingAndGlyphs" >Trans from F-011</text>
<text x="894.49" y="296.31" font-size="6.10" font-weight="normal" fill="#262626" stroke="#262626" stroke-width="0.1" textLength="14.71" lengthAdjust="spacingAndGlyphs" >0.00%</text>
<text x="12.70" y="304.14" font-size="6.10" font-weight="normal" fill="#262626" stroke="#262626" stroke-width="0.1" textLength="24.08" lengthAdjust="spacingAndGlyphs" >Founders</text>
<text x="59.60" y="304.14" font-size="6.10" font-weight="normal" fill="#262626" stroke="#262626" stroke-width="0.1" textLength="34.85" lengthAdjust="spacingAndGlyphs" >Louis Richard</text>
<text x="114.50" y="304.14" font-size="6.10" font-weight="normal" fill="#262626" stroke="#262626" stroke-width="0.1" textLength="13.86" lengthAdjust="spacingAndGlyphs" >F-011</text>
<text x="191.91" y="304.14" font-size="6.10" font-weight="normal" fill="#262626" stroke="#262626" stroke-width="0.1" textLength="20.19" lengthAdjust="spacingAndGlyphs" >1,000.00</text>
<text x="259.71" y="304.14" font-size="6.10" font-weight="normal" fill="#262626" stroke="#262626" stroke-width="0.1" textLength="10.10" lengthAdjust="spacingAndGlyphs" >0.00</text>
<text x="312.81" y="304.14" font-size="6.10" font-weight="normal" fill="#262626" stroke="#262626" stroke-width="0.1" textLength="10.10" lengthAdjust="spacingAndGlyphs" >0.05</text>
<text x="325.30" y="304.14" font-size="6.10" font-weight="normal" fill="#262626" stroke="#262626" stroke-width="0.1" textLength="26.53" lengthAdjust="spacingAndGlyphs" >03-07-2026</text>
<text x="364.30" y="304.14" font-size="6.10" font-weight="normal" fill="#262626" stroke="#262626" stroke-width="0.1" textLength="60.50" lengthAdjust="spacingAndGlyphs" >1/48 monthly, 1 year cliff</text>
<text x="458.31" y="304.14" font-size="6.10" font-weight="normal" fill="#262626" stroke="#262626" stroke-width="0.1" textLength="20.19" lengthAdjust="spacingAndGlyphs" >1,000.00</text>
<text x="480.90" y="304.14" font-size="6.10" font-weight="normal" fill="#262626" stroke="#262626" stroke-width="0.1" textLength="26.53" lengthAdjust="spacingAndGlyphs" >01-01-2022</text>
<text x="529.40" y="304.14" font-size="6.10" font-weight="normal" fill="#262626" stroke="#262626" stroke-width="0.1" textLength="20.19" lengthAdjust="spacingAndGlyphs" >1,000.00</text>
<text x="583.80" y="304.14" font-size="6.10" font-weight="normal" fill="#262626" stroke="#262626" stroke-width="0.1" textLength="26.53" lengthAdjust="spacingAndGlyphs" >03-07-2026</text>
<text x="626.30" y="304.14" font-size="6.10" font-weight="normal" fill="#262626" stroke="#262626" stroke-width="0.1" textLength="43.00" lengthAdjust="spacingAndGlyphs" >Trans from F-011</text>
<text x="894.49" y="304.14" font-size="6.10" font-weight="normal" fill="#262626" stroke="#262626" stroke-width="0.1" textLength="14.71" lengthAdjust="spacingAndGlyphs" >0.00%</text>
<text x="12.70" y="311.98" font-size="6.10" font-weight="normal" fill="#262626" stroke="#262626" stroke-width="0.1" textLength="21.54" lengthAdjust="spacingAndGlyphs" >Series A</text>
<text x="59.60" y="311.98" font-size="6.10" font-weight="normal" fill="#262626" stroke="#262626" stroke-width="0.1" textLength="27.55" lengthAdjust="spacingAndGlyphs" >Amy White</text>
<text x="114.50" y="311.98" font-size="6.10" font-weight="normal" fill="#262626" stroke="#262626" stroke-width="0.1" textLength="17.99" lengthAdjust="spacingAndGlyphs" >SB-001</text>
<text x="191.91" y="311.98" font-size="6.10" font-weight="normal" fill="#262626" stroke="#262626" stroke-width="0.1" textLength="20.19" lengthAdjust="spacingAndGlyphs" >1,000.00</text>
<text x="259.71" y="311.98" font-size="6.10" font-weight="normal" fill="#262626" stroke="#262626" stroke-width="0.1" textLength="10.10" lengthAdjust="spacingAndGlyphs" >0.00</text>
<text x="312.81" y="311.98" font-size="6.10" font-weight="normal" fill="#262626" stroke="#262626" stroke-width="0.1" textLength="10.10" lengthAdjust="spacingAndGlyphs" >0.05</text>
<text x="325.30" y="311.98" font-size="6.10" font-weight="normal" fill="#262626" stroke="#262626" stroke-width="0.1" textLength="26.53" lengthAdjust="spacingAndGlyphs" >02-21-2025</text>
<text x="679.40" y="311.98" font-size="6.10" font-weight="normal" fill="#262626" stroke="#262626" stroke-width="0.1" textLength="20.19" lengthAdjust="spacingAndGlyphs" >1,000.00</text>
<text x="732.10" y="311.98" font-size="6.10" font-weight="normal" fill="#262626" stroke="#262626" stroke-width="0.1" textLength="26.53" lengthAdjust="spacingAndGlyphs" >02-26-2025</text>
<text x="894.49" y="311.98" font-size="6.10" font-weight="normal" fill="#262626" stroke="#262626" stroke-width="0.1" textLength="14.71" lengthAdjust="spacingAndGlyphs" >0.00%</text>
<text x="12.70" y="319.81" font-size="6.10" font-weight="normal" fill="#262626" stroke="#262626" stroke-width="0.1" textLength="21.54" lengthAdjust="spacingAndGlyphs" >Series A</text>
<text x="59.60" y="319.81" font-size="6.10" font-weight="normal" fill="#262626" stroke="#262626" stroke-width="0.1" textLength="33.58" lengthAdjust="spacingAndGlyphs" >Rosa Francis</text>
<text x="114.50" y="319.81" font-size="6.10" font-weight="normal" fill="#262626" stroke="#262626" stroke-width="0.1" textLength="17.99" lengthAdjust="spacingAndGlyphs" >SA-002</text>
<text x="191.91" y="319.81" font-size="6.10" font-weight="normal" fill="#262626" stroke="#262626" stroke-width="0.1" textLength="20.19" lengthAdjust="spacingAndGlyphs" >1,000.00</text>
<text x="242.40" y="319.81" font-size="6.10" font-weight="normal" fill="#262626" stroke="#262626" stroke-width="0.1" textLength="27.40" lengthAdjust="spacingAndGlyphs" >291.666667</text>
<text x="312.81" y="319.81" font-size="6.10" font-weight="normal" fill="#262626" stroke="#262626" stroke-width="0.1" textLength="10.10" lengthAdjust="spacingAndGlyphs" >0.05</text>
<text x="325.30" y="319.81" font-size="6.10" font-weight="normal" fill="#262626" stroke="#262626" stroke-width="0.1" textLength="26.53" lengthAdjust="spacingAndGlyphs" >02-01-2025</text>
<text x="364.30" y="319.81" font-size="6.10" font-weight="normal" fill="#262626" stroke="#262626" stroke-width="0.1" textLength="60.50" lengthAdjust="spacingAndGlyphs" >1/48 monthly, 1 year cliff</text>
<text x="451.10" y="319.81" font-size="6.10" font-weight="normal" fill="#262626" stroke="#262626" stroke-width="0.1" textLength="27.40" lengthAdjust="spacingAndGlyphs" >291.666667</text>
<text x="480.90" y="319.81" font-size="6.10" font-weight="normal" fill="#262626" stroke="#262626" stroke-width="0.1" textLength="26.53" lengthAdjust="spacingAndGlyphs" >01-01-2025</text>
<text x="882.95" y="319.81" font-size="6.10" font-weight="normal" fill="#262626" stroke="#262626" stroke-width="0.1" textLength="26.25" lengthAdjust="spacingAndGlyphs" >2.095561%</text>
<text x="12.70" y="327.64" font-size="6.10" font-weight="normal" fill="#262626" stroke="#262626" stroke-width="0.1" textLength="21.54" lengthAdjust="spacingAndGlyphs" >Series A</text>
<text x="59.60" y="327.64" font-size="6.10" font-weight="normal" fill="#262626" stroke="#262626" stroke-width="0.1" textLength="27.57" lengthAdjust="spacingAndGlyphs" >Clare John</text>
<text x="114.50" y="327.64" font-size="6.10" font-weight="normal" fill="#262626" stroke="#262626" stroke-width="0.1" textLength="44.90" lengthAdjust="spacingAndGlyphs" >Exer from SO-004</text>
<text x="191.91" y="327.64" font-size="6.10" font-weight="normal" fill="#262626" stroke="#262626" stroke-width="0.1" textLength="20.19" lengthAdjust="spacingAndGlyphs" >1,000.00</text>
<text x="249.61" y="327.64" font-size="6.10" font-weight="normal" fill="#262626" stroke="#262626" stroke-width="0.1" textLength="20.19" lengthAdjust="spacingAndGlyphs" >1,000.00</text>
<text x="312.81" y="327.64" font-size="6.10" font-weight="normal" fill="#262626" stroke="#262626" stroke-width="0.1" textLength="10.10" lengthAdjust="spacingAndGlyphs" >0.05</text>
<text x="325.30" y="327.64" font-size="6.10" font-weight="normal" fill="#262626" stroke="#262626" stroke-width="0.1" textLength="26.53" lengthAdjust="spacingAndGlyphs" >02-26-2025</text>
<text x="882.95" y="327.64" font-size="6.10" font-weight="normal" fill="#262626" stroke="#262626" stroke-width="0.1" textLength="26.25" lengthAdjust="spacingAndGlyphs" >2.095561%</text>
<text x="12.70" y="335.48" font-size="6.10" font-weight="normal" fill="#262626" stroke="#262626" stroke-width="0.1" textLength="21.54" lengthAdjust="spacingAndGlyphs" >Series A</text>
<text x="59.60" y="335.48" font-size="6.10" font-weight="normal" fill="#262626" stroke="#262626" stroke-width="0.1" textLength="27.55" lengthAdjust="spacingAndGlyphs" >Amy White</text>
<text x="114.50" y="335.48" font-size="6.10" font-weight="normal" fill="#262626" stroke="#262626" stroke-width="0.1" textLength="17.99" lengthAdjust="spacingAndGlyphs" >SA-005</text>
<text x="191.91" y="335.48" font-size="6.10" font-weight="normal" fill="#262626" stroke="#262626" stroke-width="0.1" textLength="20.19" lengthAdjust="spacingAndGlyphs" >3,929.96</text>
<text x="249.61" y="335.48" font-size="6.10" font-weight="normal" fill="#262626" stroke="#262626" stroke-width="0.1" textLength="20.19" lengthAdjust="spacingAndGlyphs" >3,929.96</text>
<text x="309.92" y="335.48" font-size="6.10" font-weight="normal" fill="#262626" stroke="#262626" stroke-width="0.1" textLength="12.98" lengthAdjust="spacingAndGlyphs" >0.262</text>
<text x="325.30" y="335.48" font-size="6.10" font-weight="normal" fill="#262626" stroke="#262626" stroke-width="0.1" textLength="26.53" lengthAdjust="spacingAndGlyphs" >02-26-2025</text>
<text x="882.95" y="335.48" font-size="6.10" font-weight="normal" fill="#262626" stroke="#262626" stroke-width="0.1" textLength="26.25" lengthAdjust="spacingAndGlyphs" >8.235471%</text>
<text x="12.70" y="343.31" font-size="6.10" font-weight="normal" fill="#262626" stroke="#262626" stroke-width="0.1" textLength="21.54" lengthAdjust="spacingAndGlyphs" >Series A</text>
<text x="59.60" y="343.31" font-size="6.10" font-weight="normal" fill="#262626" stroke="#262626" stroke-width="0.1" textLength="28.83" lengthAdjust="spacingAndGlyphs" >Steve Mark</text>
<text x="114.50" y="343.31" font-size="6.10" font-weight="normal" fill="#262626" stroke="#262626" stroke-width="0.1" textLength="17.99" lengthAdjust="spacingAndGlyphs" >SA-006</text>
<text x="191.91" y="343.31" font-size="6.10" font-weight="normal" fill="#262626" stroke="#262626" stroke-width="0.1" textLength="20.19" lengthAdjust="spacingAndGlyphs" >1,000.00</text>
<text x="259.71" y="343.31" font-size="6.10" font-weight="normal" fill="#262626" stroke="#262626" stroke-width="0.1" textLength="10.10" lengthAdjust="spacingAndGlyphs" >0.00</text>
<text x="312.81" y="343.31" font-size="6.10" font-weight="normal" fill="#262626" stroke="#262626" stroke-width="0.1" textLength="10.10" lengthAdjust="spacingAndGlyphs" >0.05</text>
<text x="325.30" y="343.31" font-size="6.10" font-weight="normal" fill="#262626" stroke="#262626" stroke-width="0.1" textLength="26.53" lengthAdjust="spacingAndGlyphs" >02-28-2025</text>
<text x="679.40" y="343.31" font-size="6.10" font-weight="normal" fill="#262626" stroke="#262626" stroke-width="0.1" textLength="20.19" lengthAdjust="spacingAndGlyphs" >1,000.00</text>
<text x="732.10" y="343.31" font-size="6.10" font-weight="normal" fill="#262626" stroke="#262626" stroke-width="0.1" textLength="26.53" lengthAdjust="spacingAndGlyphs" >02-26-2025</text>
<text x="894.49" y="343.31" font-size="6.10" font-weight="normal" fill="#262626" stroke="#262626" stroke-width="0.1" textLength="14.71" lengthAdjust="spacingAndGlyphs" >0.00%</text>
<text x="12.70" y="351.14" font-size="6.10" font-weight="normal" fill="#262626" stroke="#262626" stroke-width="0.1" textLength="21.54" lengthAdjust="spacingAndGlyphs" >Series A</text>
<text x="59.60" y="351.14" font-size="6.10" font-weight="normal" fill="#262626" stroke="#262626" stroke-width="0.1" textLength="28.83" lengthAdjust="spacingAndGlyphs" >Steve Mark</text>
<text x="114.50" y="351.14" font-size="6.10" font-weight="normal" fill="#262626" stroke="#262626" stroke-width="0.1" textLength="17.99" lengthAdjust="spacingAndGlyphs" >SA-004</text>
<text x="191.91" y="351.14" font-size="6.10" font-weight="normal" fill="#262626" stroke="#262626" stroke-width="0.1" textLength="20.19" lengthAdjust="spacingAndGlyphs" >1,000.00</text>
<text x="259.71" y="351.14" font-size="6.10" font-weight="normal" fill="#262626" stroke="#262626" stroke-width="0.1" textLength="10.10" lengthAdjust="spacingAndGlyphs" >0.00</text>
<text x="312.81" y="351.14" font-size="6.10" font-weight="normal" fill="#262626" stroke="#262626" stroke-width="0.1" textLength="10.10" lengthAdjust="spacingAndGlyphs" >0.05</text>
<text x="325.30" y="351.14" font-size="6.10" font-weight="normal" fill="#262626" stroke="#262626" stroke-width="0.1" textLength="26.53" lengthAdjust="spacingAndGlyphs" >02-01-2025</text>
<text x="529.40" y="351.14" font-size="6.10" font-weight="normal" fill="#262626" stroke="#262626" stroke-width="0.1" textLength="20.19" lengthAdjust="spacingAndGlyphs" >1,000.00</text>
<text x="583.80" y="351.14" font-size="6.10" font-weight="normal" fill="#262626" stroke="#262626" stroke-width="0.1" textLength="26.53" lengthAdjust="spacingAndGlyphs" >02-26-2025</text>
<text x="626.30" y="351.14" font-size="6.10" font-weight="normal" fill="#262626" stroke="#262626" stroke-width="0.1" textLength="47.12" lengthAdjust="spacingAndGlyphs" >Trans from SA-004</text>
<text x="894.49" y="351.14" font-size="6.10" font-weight="normal" fill="#262626" stroke="#262626" stroke-width="0.1" textLength="14.71" lengthAdjust="spacingAndGlyphs" >0.00%</text>
<text x="12.70" y="358.98" font-size="6.10" font-weight="normal" fill="#262626" stroke="#262626" stroke-width="0.1" textLength="21.54" lengthAdjust="spacingAndGlyphs" >Series A</text>
<text x="59.60" y="358.98" font-size="6.10" font-weight="normal" fill="#262626" stroke="#262626" stroke-width="0.1" textLength="33.58" lengthAdjust="spacingAndGlyphs" >Rosa Francis</text>
<text x="114.50" y="358.98" font-size="6.10" font-weight="normal" fill="#262626" stroke="#262626" stroke-width="0.1" textLength="43.00" lengthAdjust="spacingAndGlyphs" >Trans from F-005</text>
<text x="191.91" y="358.98" font-size="6.10" font-weight="normal" fill="#262626" stroke="#262626" stroke-width="0.1" textLength="20.19" lengthAdjust="spacingAndGlyphs" >1,000.00</text>
<text x="249.61" y="358.98" font-size="6.10" font-weight="normal" fill="#262626" stroke="#262626" stroke-width="0.1" textLength="20.19" lengthAdjust="spacingAndGlyphs" >1,000.00</text>
<text x="312.81" y="358.98" font-size="6.10" font-weight="normal" fill="#262626" stroke="#262626" stroke-width="0.1" textLength="10.10" lengthAdjust="spacingAndGlyphs" >0.05</text>
<text x="325.30" y="358.98" font-size="6.10" font-weight="normal" fill="#262626" stroke="#262626" stroke-width="0.1" textLength="26.53" lengthAdjust="spacingAndGlyphs" >02-26-2025</text>
<text x="882.95" y="358.98" font-size="6.10" font-weight="normal" fill="#262626" stroke="#262626" stroke-width="0.1" textLength="26.25" lengthAdjust="spacingAndGlyphs" >2.095561%</text>
<text x="12.70" y="366.81" font-size="6.10" font-weight="normal" fill="#262626" stroke="#262626" stroke-width="0.1" textLength="21.54" lengthAdjust="spacingAndGlyphs" >Series A</text>
<text x="59.60" y="366.81" font-size="6.10" font-weight="normal" fill="#262626" stroke="#262626" stroke-width="0.1" textLength="28.20" lengthAdjust="spacingAndGlyphs" >Robert Lee</text>
<text x="114.50" y="366.81" font-size="6.10" font-weight="normal" fill="#262626" stroke="#262626" stroke-width="0.1" textLength="47.79" lengthAdjust="spacingAndGlyphs" >Exer from OP2-002</text>
<text x="196.23" y="366.81" font-size="6.10" font-weight="normal" fill="#262626" stroke="#262626" stroke-width="0.1" textLength="15.87" lengthAdjust="spacingAndGlyphs" >500.00</text>
<text x="253.93" y="366.81" font-size="6.10" font-weight="normal" fill="#262626" stroke="#262626" stroke-width="0.1" textLength="15.87" lengthAdjust="spacingAndGlyphs" >500.00</text>
<text x="312.81" y="366.81" font-size="6.10" font-weight="normal" fill="#262626" stroke="#262626" stroke-width="0.1" textLength="10.10" lengthAdjust="spacingAndGlyphs" >0.05</text>
<text x="325.30" y="366.81" font-size="6.10" font-weight="normal" fill="#262626" stroke="#262626" stroke-width="0.1" textLength="26.53" lengthAdjust="spacingAndGlyphs" >05-27-2025</text>
<text x="885.84" y="366.81" font-size="6.10" font-weight="normal" fill="#262626" stroke="#262626" stroke-width="0.1" textLength="23.36" lengthAdjust="spacingAndGlyphs" >1.04778%</text>
<text x="12.70" y="374.64" font-size="6.10" font-weight="normal" fill="#262626" stroke="#262626" stroke-width="0.1" textLength="21.54" lengthAdjust="spacingAndGlyphs" >Series A</text>
<text x="59.60" y="374.64" font-size="6.10" font-weight="normal" fill="#262626" stroke="#262626" stroke-width="0.1" textLength="28.20" lengthAdjust="spacingAndGlyphs" >Robert Lee</text>
<text x="114.50" y="374.64" font-size="6.10" font-weight="normal" fill="#262626" stroke="#262626" stroke-width="0.1" textLength="17.99" lengthAdjust="spacingAndGlyphs" >SA-007</text>
<text x="191.91" y="374.64" font-size="6.10" font-weight="normal" fill="#262626" stroke="#262626" stroke-width="0.1" textLength="20.19" lengthAdjust="spacingAndGlyphs" >1,000.00</text>
<text x="253.93" y="374.64" font-size="6.10" font-weight="normal" fill="#262626" stroke="#262626" stroke-width="0.1" textLength="15.87" lengthAdjust="spacingAndGlyphs" >500.00</text>
<text x="312.81" y="374.64" font-size="6.10" font-weight="normal" fill="#262626" stroke="#262626" stroke-width="0.1" textLength="10.10" lengthAdjust="spacingAndGlyphs" >0.05</text>
<text x="325.30" y="374.64" font-size="6.10" font-weight="normal" fill="#262626" stroke="#262626" stroke-width="0.1" textLength="26.53" lengthAdjust="spacingAndGlyphs" >10-01-2025</text>
<text x="529.40" y="374.64" font-size="6.10" font-weight="normal" fill="#262626" stroke="#262626" stroke-width="0.1" textLength="15.87" lengthAdjust="spacingAndGlyphs" >500.00</text>
<text x="583.80" y="374.64" font-size="6.10" font-weight="normal" fill="#262626" stroke="#262626" stroke-width="0.1" textLength="26.53" lengthAdjust="spacingAndGlyphs" >11-05-2025</text>
<text x="626.30" y="374.64" font-size="6.10" font-weight="normal" fill="#262626" stroke="#262626" stroke-width="0.1" textLength="47.12" lengthAdjust="spacingAndGlyphs" >Trans from SA-007</text>
<text x="885.84" y="374.64" font-size="6.10" font-weight="normal" fill="#262626" stroke="#262626" stroke-width="0.1" textLength="23.36" lengthAdjust="spacingAndGlyphs" >1.04778%</text>
<text x="12.70" y="382.48" font-size="6.10" font-weight="normal" fill="#262626" stroke="#262626" stroke-width="0.1" textLength="21.54" lengthAdjust="spacingAndGlyphs" >Series A</text>
<text x="59.60" y="382.48" font-size="6.10" font-weight="normal" fill="#262626" stroke="#262626" stroke-width="0.1" textLength="28.52" lengthAdjust="spacingAndGlyphs" >Annie John</text>
<text x="114.50" y="382.48" font-size="6.10" font-weight="normal" fill="#262626" stroke="#262626" stroke-width="0.1" textLength="17.99" lengthAdjust="spacingAndGlyphs" >SA-008</text>
<text x="191.91" y="382.48" font-size="6.10" font-weight="normal" fill="#262626" stroke="#262626" stroke-width="0.1" textLength="20.19" lengthAdjust="spacingAndGlyphs" >1,000.00</text>
<text x="259.71" y="382.48" font-size="6.10" font-weight="normal" fill="#262626" stroke="#262626" stroke-width="0.1" textLength="10.10" lengthAdjust="spacingAndGlyphs" >0.00</text>
<text x="312.81" y="382.48" font-size="6.10" font-weight="normal" fill="#262626" stroke="#262626" stroke-width="0.1" textLength="10.10" lengthAdjust="spacingAndGlyphs" >0.05</text>
<text x="325.30" y="382.48" font-size="6.10" font-weight="normal" fill="#262626" stroke="#262626" stroke-width="0.1" textLength="26.53" lengthAdjust="spacingAndGlyphs" >11-05-2025</text>
<text x="529.40" y="382.48" font-size="6.10" font-weight="normal" fill="#262626" stroke="#262626" stroke-width="0.1" textLength="20.19" lengthAdjust="spacingAndGlyphs" >1,000.00</text>
<text x="583.80" y="382.48" font-size="6.10" font-weight="normal" fill="#262626" stroke="#262626" stroke-width="0.1" textLength="26.53" lengthAdjust="spacingAndGlyphs" >11-05-2025</text>
<text x="626.30" y="382.48" font-size="6.10" font-weight="normal" fill="#262626" stroke="#262626" stroke-width="0.1" textLength="47.12" lengthAdjust="spacingAndGlyphs" >Trans from SA-008</text>
<text x="894.49" y="382.48" font-size="6.10" font-weight="normal" fill="#262626" stroke="#262626" stroke-width="0.1" textLength="14.71" lengthAdjust="spacingAndGlyphs" >0.00%</text>
<text x="12.70" y="390.31" font-size="6.10" font-weight="normal" fill="#262626" stroke="#262626" stroke-width="0.1" textLength="21.54" lengthAdjust="spacingAndGlyphs" >Series A</text>
<text x="59.60" y="390.31" font-size="6.10" font-weight="normal" fill="#262626" stroke="#262626" stroke-width="0.1" textLength="27.57" lengthAdjust="spacingAndGlyphs" >Clara John</text>
<text x="114.50" y="390.31" font-size="6.10" font-weight="normal" fill="#262626" stroke="#262626" stroke-width="0.1" textLength="47.12" lengthAdjust="spacingAndGlyphs" >Trans from SB-005</text>
<text x="191.91" y="390.31" font-size="6.10" font-weight="normal" fill="#262626" stroke="#262626" stroke-width="0.1" textLength="20.19" lengthAdjust="spacingAndGlyphs" >1,000.00</text>
<text x="249.61" y="390.31" font-size="6.10" font-weight="normal" fill="#262626" stroke="#262626" stroke-width="0.1" textLength="20.19" lengthAdjust="spacingAndGlyphs" >1,000.00</text>
<text x="312.81" y="390.31" font-size="6.10" font-weight="normal" fill="#262626" stroke="#262626" stroke-width="0.1" textLength="10.10" lengthAdjust="spacingAndGlyphs" >0.05</text>
<text x="325.30" y="390.31" font-size="6.10" font-weight="normal" fill="#262626" stroke="#262626" stroke-width="0.1" textLength="26.53" lengthAdjust="spacingAndGlyphs" >11-28-2025</text>
<text x="882.95" y="390.31" font-size="6.10" font-weight="normal" fill="#262626" stroke="#262626" stroke-width="0.1" textLength="26.25" lengthAdjust="spacingAndGlyphs" >2.095561%</text>
<text x="12.70" y="398.14" font-size="6.10" font-weight="normal" fill="#262626" stroke="#262626" stroke-width="0.1" textLength="21.54" lengthAdjust="spacingAndGlyphs" >Series A</text>
<text x="59.60" y="398.14" font-size="6.10" font-weight="normal" fill="#262626" stroke="#262626" stroke-width="0.1" textLength="27.57" lengthAdjust="spacingAndGlyphs" >Clara John</text>
<text x="114.50" y="398.14" font-size="6.10" font-weight="normal" fill="#262626" stroke="#262626" stroke-width="0.1" textLength="47.12" lengthAdjust="spacingAndGlyphs" >Trans from SB-006</text>
<text x="196.23" y="398.14" font-size="6.10" font-weight="normal" fill="#262626" stroke="#262626" stroke-width="0.1" textLength="15.87" lengthAdjust="spacingAndGlyphs" >500.00</text>
<text x="253.93" y="398.14" font-size="6.10" font-weight="normal" fill="#262626" stroke="#262626" stroke-width="0.1" textLength="15.87" lengthAdjust="spacingAndGlyphs" >500.00</text>
<text x="312.81" y="398.14" font-size="6.10" font-weight="normal" fill="#262626" stroke="#262626" stroke-width="0.1" textLength="10.10" lengthAdjust="spacingAndGlyphs" >0.05</text>
<text x="325.30" y="398.14" font-size="6.10" font-weight="normal" fill="#262626" stroke="#262626" stroke-width="0.1" textLength="26.53" lengthAdjust="spacingAndGlyphs" >11-30-2025</text>
<text x="885.84" y="398.14" font-size="6.10" font-weight="normal" fill="#262626" stroke="#262626" stroke-width="0.1" textLength="23.36" lengthAdjust="spacingAndGlyphs" >1.04778%</text>
<text x="12.70" y="405.97" font-size="6.10" font-weight="normal" fill="#262626" stroke="#262626" stroke-width="0.1" textLength="21.54" lengthAdjust="spacingAndGlyphs" >Series A</text>
<text x="59.60" y="405.97" font-size="6.10" font-weight="normal" fill="#262626" stroke="#262626" stroke-width="0.1" textLength="34.85" lengthAdjust="spacingAndGlyphs" >Louis Richard</text>
<text x="114.50" y="405.97" font-size="6.10" font-weight="normal" fill="#262626" stroke="#262626" stroke-width="0.1" textLength="17.99" lengthAdjust="spacingAndGlyphs" >SA-010</text>
<text x="191.91" y="405.97" font-size="6.10" font-weight="normal" fill="#262626" stroke="#262626" stroke-width="0.1" textLength="20.19" lengthAdjust="spacingAndGlyphs" >1,000.00</text>
<text x="259.71" y="405.97" font-size="6.10" font-weight="normal" fill="#262626" stroke="#262626" stroke-width="0.1" textLength="10.10" lengthAdjust="spacingAndGlyphs" >0.00</text>
<text x="312.81" y="405.97" font-size="6.10" font-weight="normal" fill="#262626" stroke="#262626" stroke-width="0.1" textLength="10.10" lengthAdjust="spacingAndGlyphs" >0.05</text>
<text x="325.30" y="405.97" font-size="6.10" font-weight="normal" fill="#262626" stroke="#262626" stroke-width="0.1" textLength="26.53" lengthAdjust="spacingAndGlyphs" >12-01-2025</text>
<text x="529.40" y="405.97" font-size="6.10" font-weight="normal" fill="#262626" stroke="#262626" stroke-width="0.1" textLength="20.19" lengthAdjust="spacingAndGlyphs" >1,000.00</text>
<text x="583.80" y="405.97" font-size="6.10" font-weight="normal" fill="#262626" stroke="#262626" stroke-width="0.1" textLength="26.53" lengthAdjust="spacingAndGlyphs" >12-16-2025</text>
<text x="626.30" y="405.97" font-size="6.10" font-weight="normal" fill="#262626" stroke="#262626" stroke-width="0.1" textLength="47.12" lengthAdjust="spacingAndGlyphs" >Trans from SA-010</text>
<text x="894.49" y="405.97" font-size="6.10" font-weight="normal" fill="#262626" stroke="#262626" stroke-width="0.1" textLength="14.71" lengthAdjust="spacingAndGlyphs" >0.00%</text>
<text x="12.70" y="413.81" font-size="6.10" font-weight="normal" fill="#262626" stroke="#262626" stroke-width="0.1" textLength="21.54" lengthAdjust="spacingAndGlyphs" >Series A</text>
<text x="59.60" y="413.81" font-size="6.10" font-weight="normal" fill="#262626" stroke="#262626" stroke-width="0.1" textLength="27.55" lengthAdjust="spacingAndGlyphs" >Amy White</text>
<text x="114.50" y="413.81" font-size="6.10" font-weight="normal" fill="#262626" stroke="#262626" stroke-width="0.1" textLength="47.12" lengthAdjust="spacingAndGlyphs" >Trans from SA-010</text>
<text x="191.91" y="413.81" font-size="6.10" font-weight="normal" fill="#262626" stroke="#262626" stroke-width="0.1" textLength="20.19" lengthAdjust="spacingAndGlyphs" >1,000.00</text>
<text x="249.61" y="413.81" font-size="6.10" font-weight="normal" fill="#262626" stroke="#262626" stroke-width="0.1" textLength="20.19" lengthAdjust="spacingAndGlyphs" >1,000.00</text>
<text x="312.81" y="413.81" font-size="6.10" font-weight="normal" fill="#262626" stroke="#262626" stroke-width="0.1" textLength="10.10" lengthAdjust="spacingAndGlyphs" >0.05</text>
<text x="325.30" y="413.81" font-size="6.10" font-weight="normal" fill="#262626" stroke="#262626" stroke-width="0.1" textLength="26.53" lengthAdjust="spacingAndGlyphs" >12-16-2025</text>
<text x="882.95" y="413.81" font-size="6.10" font-weight="normal" fill="#262626" stroke="#262626" stroke-width="0.1" textLength="26.25" lengthAdjust="spacingAndGlyphs" >2.095561%</text>
<text x="12.70" y="421.64" font-size="6.10" font-weight="normal" fill="#262626" stroke="#262626" stroke-width="0.1" textLength="21.54" lengthAdjust="spacingAndGlyphs" >Series A</text>
<text x="59.60" y="421.64" font-size="6.10" font-weight="normal" fill="#262626" stroke="#262626" stroke-width="0.1" textLength="25.02" lengthAdjust="spacingAndGlyphs" >Alexa Will</text>
<text x="114.50" y="421.64" font-size="6.10" font-weight="normal" fill="#262626" stroke="#262626" stroke-width="0.1" textLength="17.99" lengthAdjust="spacingAndGlyphs" >SA-011</text>
<text x="191.91" y="421.64" font-size="6.10" font-weight="normal" fill="#262626" stroke="#262626" stroke-width="0.1" textLength="20.19" lengthAdjust="spacingAndGlyphs" >1,000.00</text>
<text x="249.61" y="421.64" font-size="6.10" font-weight="normal" fill="#262626" stroke="#262626" stroke-width="0.1" textLength="20.19" lengthAdjust="spacingAndGlyphs" >1,000.00</text>
<text x="312.81" y="421.64" font-size="6.10" font-weight="normal" fill="#262626" stroke="#262626" stroke-width="0.1" textLength="10.10" lengthAdjust="spacingAndGlyphs" >0.05</text>
<text x="325.30" y="421.64" font-size="6.10" font-weight="normal" fill="#262626" stroke="#262626" stroke-width="0.1" textLength="26.53" lengthAdjust="spacingAndGlyphs" >02-11-2026</text>
<text x="882.95" y="421.64" font-size="6.10" font-weight="normal" fill="#262626" stroke="#262626" stroke-width="0.1" textLength="26.25" lengthAdjust="spacingAndGlyphs" >2.095561%</text>
<text x="12.70" y="429.47" font-size="6.10" font-weight="normal" fill="#262626" stroke="#262626" stroke-width="0.1" textLength="21.54" lengthAdjust="spacingAndGlyphs" >Series A</text>
<text x="59.60" y="429.47" font-size="6.10" font-weight="normal" fill="#262626" stroke="#262626" stroke-width="0.1" textLength="28.20" lengthAdjust="spacingAndGlyphs" >Robert Lee</text>
<text x="114.50" y="429.47" font-size="6.10" font-weight="normal" fill="#262626" stroke="#262626" stroke-width="0.1" textLength="17.99" lengthAdjust="spacingAndGlyphs" >SA-006</text>
<text x="191.91" y="429.47" font-size="6.10" font-weight="normal" fill="#262626" stroke="#262626" stroke-width="0.1" textLength="20.19" lengthAdjust="spacingAndGlyphs" >1,000.00</text>
<text x="249.61" y="429.47" font-size="6.10" font-weight="normal" fill="#262626" stroke="#262626" stroke-width="0.1" textLength="20.19" lengthAdjust="spacingAndGlyphs" >1,000.00</text>
<text x="312.81" y="429.47" font-size="6.10" font-weight="normal" fill="#262626" stroke="#262626" stroke-width="0.1" textLength="10.10" lengthAdjust="spacingAndGlyphs" >0.05</text>
<text x="325.30" y="429.47" font-size="6.10" font-weight="normal" fill="#262626" stroke="#262626" stroke-width="0.1" textLength="26.53" lengthAdjust="spacingAndGlyphs" >02-28-2026</text>
<text x="882.95" y="429.47" font-size="6.10" font-weight="normal" fill="#262626" stroke="#262626" stroke-width="0.1" textLength="26.25" lengthAdjust="spacingAndGlyphs" >2.095561%</text>
<text x="12.70" y="437.31" font-size="6.10" font-weight="normal" fill="#262626" stroke="#262626" stroke-width="0.1" textLength="21.54" lengthAdjust="spacingAndGlyphs" >Series A</text>
<text x="59.60" y="437.31" font-size="6.10" font-weight="normal" fill="#262626" stroke="#262626" stroke-width="0.1" textLength="34.85" lengthAdjust="spacingAndGlyphs" >Louis Richard</text>
<text x="114.50" y="437.31" font-size="6.10" font-weight="normal" fill="#262626" stroke="#262626" stroke-width="0.1" textLength="43.00" lengthAdjust="spacingAndGlyphs" >Trans from F-011</text>
<text x="191.91" y="437.31" font-size="6.10" font-weight="normal" fill="#262626" stroke="#262626" stroke-width="0.1" textLength="20.19" lengthAdjust="spacingAndGlyphs" >1,000.00</text>
<text x="249.61" y="437.31" font-size="6.10" font-weight="normal" fill="#262626" stroke="#262626" stroke-width="0.1" textLength="20.19" lengthAdjust="spacingAndGlyphs" >1,000.00</text>
<text x="312.81" y="437.31" font-size="6.10" font-weight="normal" fill="#262626" stroke="#262626" stroke-width="0.1" textLength="10.10" lengthAdjust="spacingAndGlyphs" >0.07</text>
<text x="325.30" y="437.31" font-size="6.10" font-weight="normal" fill="#262626" stroke="#262626" stroke-width="0.1" textLength="26.53" lengthAdjust="spacingAndGlyphs" >03-07-2026</text>
<text x="882.95" y="437.31" font-size="6.10" font-weight="normal" fill="#262626" stroke="#262626" stroke-width="0.1" textLength="26.25" lengthAdjust="spacingAndGlyphs" >2.095561%</text>
<text x="12.70" y="445.14" font-size="6.10" font-weight="normal" fill="#262626" stroke="#262626" stroke-width="0.1" textLength="21.54" lengthAdjust="spacingAndGlyphs" >Series A</text>
<text x="59.60" y="445.14" font-size="6.10" font-weight="normal" fill="#262626" stroke="#262626" stroke-width="0.1" textLength="33.58" lengthAdjust="spacingAndGlyphs" >Rosa Francis</text>
<text x="114.50" y="445.14" font-size="6.10" font-weight="normal" fill="#262626" stroke="#262626" stroke-width="0.1" textLength="43.00" lengthAdjust="spacingAndGlyphs" >Trans from F-011</text>
<text x="191.91" y="445.14" font-size="6.10" font-weight="normal" fill="#262626" stroke="#262626" stroke-width="0.1" textLength="20.19" lengthAdjust="spacingAndGlyphs" >1,000.00</text>
<text x="249.61" y="445.14" font-size="6.10" font-weight="normal" fill="#262626" stroke="#262626" stroke-width="0.1" textLength="20.19" lengthAdjust="spacingAndGlyphs" >1,000.00</text>
<text x="312.81" y="445.14" font-size="6.10" font-weight="normal" fill="#262626" stroke="#262626" stroke-width="0.1" textLength="10.10" lengthAdjust="spacingAndGlyphs" >0.05</text>
<text x="325.30" y="445.14" font-size="6.10" font-weight="normal" fill="#262626" stroke="#262626" stroke-width="0.1" textLength="26.53" lengthAdjust="spacingAndGlyphs" >03-07-2026</text>
<text x="882.95" y="445.14" font-size="6.10" font-weight="normal" fill="#262626" stroke="#262626" stroke-width="0.1" textLength="26.25" lengthAdjust="spacingAndGlyphs" >2.095561%</text>
<rect x="928.40" y="122.50" width="11.60" height="347.50" fill="#E9E9E9" />
<rect x="928.40" y="129.60" width="2.00" height="340.40" fill="#d9d9d9" />
<rect x="931" y="123.2" width="8.8" height="9" fill="#fff" stroke="#c6c6c6" stroke-width="0.5"/><path d="M933.3 129.3 h4.2 l-2.1 -2.2 z" fill="#333"/>
<rect x="931" y="133" width="8.8" height="318.7" fill="#fff" stroke="#c6c6c6" stroke-width="0.5"/>
<rect x="931" y="461.6" width="8.8" height="8.4" fill="#fff" stroke="#c6c6c6" stroke-width="0.5"/><path d="M933.3 464.8 h4.2 l-2.1 2.2 z" fill="#333"/>
<rect x="0.00" y="470.30" width="940.00" height="16.90" fill="#E9E9E9" />
<line x1="0.00" y1="470.30" x2="928.40" y2="470.30" stroke="#c6c6c6" stroke-width="0.6" />
<path d="M16.8 476.6 l-1.6 1.6 l1.6 1.6" fill="none" stroke="#b0b0b0" stroke-width="0.7"/><path d="M30.5 476.6 l1.6 1.6 l-1.6 1.6" fill="none" stroke="#b0b0b0" stroke-width="0.7"/>
<line x1="55.40" y1="473.00" x2="55.40" y2="484.50" stroke="#b8b8b8" stroke-width="0.6" />
<line x1="167.20" y1="473.00" x2="167.20" y2="484.50" stroke="#b8b8b8" stroke-width="0.6" />
<line x1="393.60" y1="473.00" x2="393.60" y2="484.50" stroke="#b8b8b8" stroke-width="0.6" />
<line x1="436.50" y1="473.00" x2="436.50" y2="484.50" stroke="#b8b8b8" stroke-width="0.6" />
<line x1="484.10" y1="473.00" x2="484.10" y2="484.50" stroke="#b8b8b8" stroke-width="0.6" />
<line x1="544.10" y1="473.00" x2="544.10" y2="484.50" stroke="#b8b8b8" stroke-width="0.6" />
<text x="63.80" y="480.70" font-size="9.20" font-weight="normal" fill="#444444" stroke="#444444" stroke-width="0.1" textLength="94.50" lengthAdjust="spacingAndGlyphs" >Extended captable report</text>
<text x="174.40" y="480.70" font-size="9.20" font-weight="normal" fill="#444444" stroke="#444444" stroke-width="0.1" textLength="48.20" lengthAdjust="spacingAndGlyphs" >Shareholders</text>
<text x="319.60" y="480.70" font-size="9.20" font-weight="normal" fill="#444444" stroke="#444444" stroke-width="0.1" textLength="65.10" lengthAdjust="spacingAndGlyphs" >Preferred Equities</text>
<text x="400.00" y="480.70" font-size="9.20" font-weight="normal" fill="#444444" stroke="#444444" stroke-width="0.1" textLength="29.30" lengthAdjust="spacingAndGlyphs" >Options</text>
<text x="442.80" y="480.70" font-size="9.20" font-weight="normal" fill="#444444" stroke="#444444" stroke-width="0.1" textLength="33.90" lengthAdjust="spacingAndGlyphs" >Warrants</text>
<text x="490.80" y="480.70" font-size="9.20" font-weight="normal" fill="#444444" stroke="#444444" stroke-width="0.1" textLength="45.90" lengthAdjust="spacingAndGlyphs" >Convertibles</text>
<rect x="229.70" y="470.10" width="82.20" height="13.30" fill="#ffffff" />
<rect x="230.3" y="470.7" width="81" height="12.4" fill="none" stroke="#d0202e" stroke-width="1.3"/>
<text x="235.80" y="480.70" font-size="9.20" font-weight="bold" fill="#1a6a3c" stroke="#1a6a3c" stroke-width="0.3" textLength="69.20" lengthAdjust="spacingAndGlyphs" >Common Equities</text>
<rect x="233.00" y="484.30" width="75.00" height="1.10" fill="#4c9a6a" />
<circle cx="567.9" cy="479" r="4.6" fill="none" stroke="#777" stroke-width="0.7"/><path d="M565.4 479 h5 M567.9 476.5 v5" stroke="#777" stroke-width="0.7"/>
<rect x="585.30" y="475.50" width="0.80" height="0.80" fill="#9a9a9a" />
<rect x="585.30" y="478.30" width="0.80" height="0.80" fill="#9a9a9a" />
<rect x="585.30" y="481.10" width="0.80" height="0.80" fill="#9a9a9a" />
<rect x="595.6" y="474.5" width="9" height="9" fill="#fff" stroke="#c6c6c6" stroke-width="0.5"/><path d="M601.4 476.8 v4.2 l-2.2 -2.1 z" fill="#333"/>
<rect x="604.6" y="474.5" width="257.5" height="9" fill="#fff" stroke="#c6c6c6" stroke-width="0.5"/>
<rect x="918.5" y="474.5" width="9.2" height="9" fill="#fff" stroke="#c6c6c6" stroke-width="0.5"/><path d="M921.8 476.8 v4.2 l2.2 -2.1 z" fill="#333"/>
<rect x="0.00" y="487.20" width="940.00" height="11.80" fill="#F3F3F3" />
<text x="7.10" y="495.60" font-size="6.60" font-weight="normal" fill="#444" stroke="#444" stroke-width="0.1" textLength="17.70" lengthAdjust="spacingAndGlyphs" >Ready</text>
<text x="35.00" y="495.60" font-size="6.60" font-weight="normal" fill="#444" stroke="#444" stroke-width="0.1" textLength="25.00" lengthAdjust="spacingAndGlyphs" >Calculate</text>
<rect x="73.8" y="490.2" width="7.4" height="6" fill="#d2d2d2" stroke="#bbb" stroke-width="0.4"/><rect x="73.8" y="489.6" width="7.4" height="1.8" fill="#555"/><rect x="75" y="492.6" width="5" height="0.5" fill="#fff"/><rect x="75" y="494.4" width="5" height="0.5" fill="#fff"/>
<g fill="none" stroke="#555" stroke-width="0.7"><path d="M95.4 489.4 a3.6 3.6 0 0 0 0 7" stroke-dasharray="0.9 0.5"/><circle cx="99.4" cy="491" r="0.7" fill="#555"/><path d="M97.2 493 h4.4 M99.4 492 v2 M97.6 497.6 l1.8 -3 l1.8 3"/></g>
<text x="103.40" y="495.60" font-size="6.60" font-weight="bold" fill="#333" textLength="74.60" lengthAdjust="spacingAndGlyphs" >Accessibility: Investigate</text>
<rect x="759.20" y="487.20" width="23.80" height="11.80" fill="#d6d6d6" />
<g fill="none" stroke="#666" stroke-width="0.5"><rect x="767" y="488.8" width="8" height="7.6"/><line x1="767" y1="490.7" x2="775" y2="490.7"/><line x1="767" y1="492.6" x2="775" y2="492.6"/><line x1="767" y1="494.5" x2="775" y2="494.5"/><line x1="769.7" y1="488.8" x2="769.7" y2="496.4"/><line x1="772.3" y1="488.8" x2="772.3" y2="496.4"/></g>
<g fill="none" stroke="#777" stroke-width="0.6"><rect x="791" y="488.8" width="8.4" height="7.6"/><rect x="792.8" y="490.3" width="4.8" height="4.6"/></g>
<g fill="none" stroke="#777" stroke-width="0.6"><rect x="815.2" y="488.8" width="8.4" height="7.6"/><path d="M815.2 493.5 h4.2 v-4.7"/></g>
<line x1="835.50" y1="492.30" x2="840.00" y2="492.30" stroke="#777" stroke-width="0.6" />
<line x1="843.50" y1="492.30" x2="904.20" y2="492.30" stroke="#888" stroke-width="0.6" />
<rect x="861.30" y="488.80" width="3.40" height="6.80" fill="#444" />
<line x1="874.10" y1="490.80" x2="874.10" y2="493.80" stroke="#777" stroke-width="0.6" />
<path d="M907.8 492.3 h4.4 M910 490.1 v4.4" stroke="#777" stroke-width="0.6"/>
<text x="920.00" y="495.60" font-size="6.60" font-weight="normal" fill="#444" stroke="#444" stroke-width="0.1" textLength="12.30" lengthAdjust="spacingAndGlyphs" >65%</text>
</svg>
</body></html>
